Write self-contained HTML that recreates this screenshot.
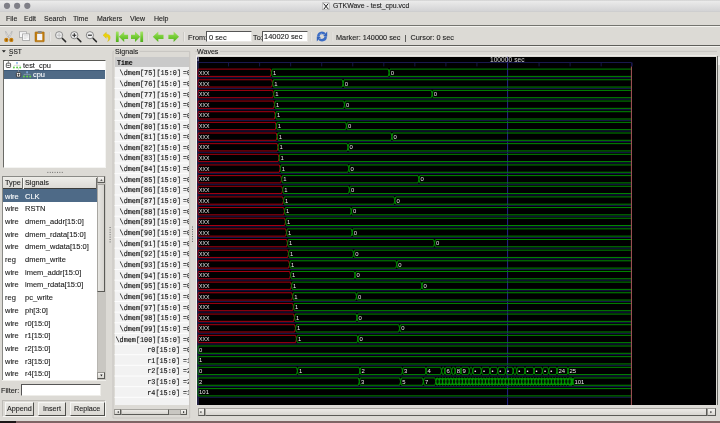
<!DOCTYPE html><html><head><meta charset="utf-8"><style>
html,body{margin:0;padding:0;}
body{width:720px;height:423px;overflow:hidden;position:relative;background:#dcdad5;font-family:"Liberation Sans",sans-serif;}
.t{position:absolute;white-space:pre;will-change:transform;-webkit-text-stroke:0.1px currentColor;}
.r{position:absolute;box-sizing:border-box;}
svg{position:absolute;left:0;top:0;will-change:transform;}
</style></head><body>
<div class="r" style="left:0px;top:0px;width:720px;height:12px;background:linear-gradient(#c4c4c4 0px,#ebebeb 1px,#e4e4e4 4px,#d3d3d5 11px,#c9c9c9 12px);"></div>
<svg width="720" height="12" viewBox="0 0 720 12"><circle cx="7" cy="5.8" r="3.1" fill="#7f7f87"/><circle cx="17.1" cy="5.8" r="3.1" fill="#7f7f87"/><circle cx="27.3" cy="5.8" r="3.1" fill="#7f7f87"/><rect x="322.3" y="2.8" width="7.4" height="7" fill="#f0f0f0" stroke="#9a9a9a" stroke-width="0.5"/><path d="M323.6 3.6 L328.4 9.2 M328.2 3.6 L323.8 9.2" stroke="#222" stroke-width="1"/></svg>
<div class="t" style="left:332.90px;top:2.76px;font-family:'Liberation Sans', sans-serif;font-size:6.9px;line-height:6.9px;color:#1a1a1a;font-weight:normal;">GTKWave - test_cpu.vcd</div>
<div class="t" style="left:5.70px;top:15.17px;font-family:'Liberation Sans', sans-serif;font-size:7px;line-height:7px;color:#202020;font-weight:normal;">File</div>
<div class="t" style="left:23.70px;top:15.17px;font-family:'Liberation Sans', sans-serif;font-size:7px;line-height:7px;color:#202020;font-weight:normal;">Edit</div>
<div class="t" style="left:43.70px;top:15.17px;font-family:'Liberation Sans', sans-serif;font-size:7px;line-height:7px;color:#202020;font-weight:normal;">Search</div>
<div class="t" style="left:73.10px;top:15.17px;font-family:'Liberation Sans', sans-serif;font-size:7px;line-height:7px;color:#202020;font-weight:normal;">Time</div>
<div class="t" style="left:97.00px;top:15.17px;font-family:'Liberation Sans', sans-serif;font-size:7px;line-height:7px;color:#202020;font-weight:normal;">Markers</div>
<div class="t" style="left:130.30px;top:15.17px;font-family:'Liberation Sans', sans-serif;font-size:7px;line-height:7px;color:#202020;font-weight:normal;">View</div>
<div class="t" style="left:153.70px;top:15.17px;font-family:'Liberation Sans', sans-serif;font-size:7px;line-height:7px;color:#202020;font-weight:normal;">Help</div>
<div class="r" style="left:0px;top:25px;width:720px;height:1px;background:#74746f;"></div>
<div class="r" style="left:0px;top:26px;width:720px;height:1px;background:#f4f3ef;"></div>
<svg width="720" height="50" viewBox="0 0 720 50">
<defs>
<linearGradient id="gg" x1="0" y1="0" x2="0" y2="1"><stop offset="0" stop-color="#a6e46a"/><stop offset="0.5" stop-color="#74cc34"/><stop offset="1" stop-color="#4fae1c"/></linearGradient>
<linearGradient id="bg1" x1="0" y1="0" x2="0" y2="1"><stop offset="0" stop-color="#6c9ae0"/><stop offset="1" stop-color="#2f62c0"/></linearGradient>
</defs>
<!-- scissors -->
<path d="M5.6 31.2 Q5.2 33.8 8.2 37.6 L9.2 37 Q6.8 33.4 5.6 31.2 Z" fill="#f2f2f2" stroke="#a4a4a4" stroke-width="0.6"/>
<path d="M12 31.2 Q12.4 33.8 9.4 37.6 L8.4 37 Q10.8 33.4 12 31.2 Z" fill="#f2f2f2" stroke="#a4a4a4" stroke-width="0.6"/>
<ellipse cx="6.3" cy="39.9" rx="2.1" ry="2.2" fill="#c67f0c"/>
<ellipse cx="11.3" cy="39.9" rx="2.1" ry="2.2" fill="#c67f0c"/>
<circle cx="6.4" cy="39.9" r="0.6" fill="#6a4000"/>
<circle cx="11.2" cy="39.9" r="0.6" fill="#6a4000"/>
<!-- copy -->
<rect x="19.5" y="31.7" width="7" height="5.8" fill="#f6f6f6" stroke="#a8a8a8" stroke-width="0.8"/>
<rect x="22.6" y="33.9" width="7" height="6.5" fill="#f9f9f9" stroke="#a0a0a0" stroke-width="0.8"/>
<path d="M23.8 35.6 H28.4 M23.8 37 H28.4 M23.8 38.4 H26.4" stroke="#c8c8c8" stroke-width="0.5"/>
<!-- clipboard -->
<rect x="35" y="31.9" width="9.2" height="9.9" rx="0.6" fill="#c27e10" stroke="#9a6008" stroke-width="0.5"/>
<rect x="37.1" y="33.8" width="5.2" height="6.4" fill="#f4f4f8"/>
<rect x="37.6" y="31" width="4.2" height="2.3" rx="0.8" fill="#8a8a8a"/>
<!-- sep -->
<rect x="49.6" y="32" width="0.6" height="9.5" fill="#c4c2bd"/><rect x="50.2" y="32" width="0.6" height="9.5" fill="#f2f1ee"/>
<!-- zoom fit -->
<path d="M62.2 38.2 L65.6 41.6" stroke="#2a2a2a" stroke-width="1.5" stroke-linecap="round"/>
<circle cx="59.1" cy="35.2" r="3.6" fill="#eeeeee" stroke="#808080" stroke-width="0.9"/>
<path d="M59.1 32.6 V37.8 M56.5 35.2 H61.7" stroke="#b8b8b8" stroke-width="0.8"/>
<!-- zoom in -->
<path d="M77.4 38.2 L80.8 41.6" stroke="#2a2a2a" stroke-width="1.5" stroke-linecap="round"/>
<circle cx="74.3" cy="35.2" r="3.6" fill="#f0f0f0" stroke="#7a7a7a" stroke-width="0.9"/>
<path d="M74.3 33.2 V37.2 M72.3 35.2 H76.3" stroke="#2a2a2a" stroke-width="1.1"/>
<!-- zoom out -->
<path d="M93 38.2 L96.4 41.6" stroke="#2a2a2a" stroke-width="1.5" stroke-linecap="round"/>
<circle cx="89.9" cy="35.2" r="3.6" fill="#f0f0f0" stroke="#7a7a7a" stroke-width="0.9"/>
<path d="M87.9 35.2 H91.9" stroke="#2a2a2a" stroke-width="1.2"/>
<!-- undo yellow -->
<path d="M103 35.2 L106.3 32.2 L106.3 34 Q110.6 34.4 110.2 38.2 Q109.8 40.8 107.6 41.6 Q108.9 39.6 108.2 38 Q107.6 36.6 106.3 36.6 L106.3 38.4 Z" fill="#ecd20a" stroke="#c8ac00" stroke-width="0.3"/>
<!-- go first -->
<rect x="115.9" y="31.5" width="2.8" height="10.5" rx="0.5" fill="url(#gg)"/>
<path d="M118.9 36.8 L124.2 31.6 V34.8 H128.1 V39 H124.2 V42 Z" fill="url(#gg)"/>
<!-- go last -->
<path d="M131 34.8 H135 V31.6 L140.2 36.8 L135 42 V39 H131 Z" fill="url(#gg)"/>
<rect x="140.3" y="31.5" width="2.8" height="10.5" rx="0.5" fill="url(#gg)"/>
<!-- sep -->
<rect x="147.2" y="32" width="0.6" height="9.5" fill="#c4c2bd"/><rect x="147.8" y="32" width="0.6" height="9.5" fill="#f2f1ee"/>
<!-- left arrow -->
<path d="M152.8 36.8 L158.3 31.6 V34.8 H163.5 V39 H158.3 V42 Z" fill="url(#gg)"/>
<!-- right arrow -->
<path d="M168.4 34.8 H173.6 V31.6 L179 36.8 L173.6 42 V39 H168.4 Z" fill="url(#gg)"/>
<!-- sep -->
<rect x="183.4" y="32" width="0.6" height="9.5" fill="#c4c2bd"/><rect x="184" y="32" width="0.6" height="9.5" fill="#f2f1ee"/>
<rect x="310.8" y="32" width="0.6" height="9.5" fill="#c4c2bd"/><rect x="311.4" y="32" width="0.6" height="9.5" fill="#f2f1ee"/>
<rect x="331.9" y="32" width="0.6" height="9.5" fill="#c4c2bd"/><rect x="332.5" y="32" width="0.6" height="9.5" fill="#f2f1ee"/>
<!-- refresh -->
<g fill="none" stroke="#3b6cc4" stroke-width="2.4">
<path d="M318.2 36.6 Q318.4 32.9 322 32.7 Q323.8 32.7 324.8 33.9"/>
<path d="M325.8 36.4 Q325.6 40.1 322 40.3 Q320.2 40.3 319.2 39.1"/>
</g>
<path d="M323.2 35.9 L327.2 31.6 L327.2 36.6 Z" fill="#3464bc"/>
<path d="M320.8 37.1 L316.8 41.4 L316.8 36.4 Z" fill="#3464bc"/>
<path d="M319.6 35 Q320.4 33.6 322 33.5" stroke="#8fb4ec" stroke-width="0.6" fill="none"/>
</svg>

<div class="t" style="left:188.00px;top:33.62px;font-family:'Liberation Sans', sans-serif;font-size:7.3px;line-height:7.3px;color:#202020;font-weight:normal;">From:</div>
<div class="r" style="left:206px;top:31px;width:45.5px;height:11.3px;background:#fff;border-top:1px solid #555;border-left:1px solid #555;border-right:1px solid #e8e6e2;border-bottom:1px solid #e8e6e2;"></div>
<div class="t" style="left:208.60px;top:33.54px;font-family:'Liberation Sans', sans-serif;font-size:7.4px;line-height:7.4px;color:#202020;font-weight:normal;">0 sec</div>
<div class="t" style="left:253.00px;top:33.62px;font-family:'Liberation Sans', sans-serif;font-size:7.3px;line-height:7.3px;color:#202020;font-weight:normal;">To:</div>
<div class="r" style="left:262.3px;top:31px;width:45.5px;height:11.3px;background:#fff;border-top:1px solid #555;border-left:1px solid #555;border-right:1px solid #e8e6e2;border-bottom:1px solid #e8e6e2;"></div>
<div class="t" style="left:264.20px;top:33.49px;font-family:'Liberation Sans', sans-serif;font-size:7.45px;line-height:7.45px;color:#202020;font-weight:normal;">140020 sec</div>
<div class="t" style="left:335.80px;top:33.72px;font-family:'Liberation Sans', sans-serif;font-size:7.3px;line-height:7.3px;color:#202020;font-weight:normal;">Marker: 140000 sec  |  Cursor: 0 sec</div>
<div class="r" style="left:0px;top:45px;width:720px;height:1px;background:#5e5e5a;"></div>
<div class="r" style="left:0px;top:46px;width:720px;height:1px;background:#f2f1ed;"></div>
<svg width="720" height="423" viewBox="0 0 720 423" style="z-index:1"><path d="M1.8 50.2 L5.9 50.2 L3.85 52.5 Z" fill="#222"/></svg>
<div class="t" style="left:8.70px;top:49.11px;font-family:'Liberation Sans', sans-serif;font-size:6.6px;line-height:6.6px;color:#202020;font-weight:normal;">SST</div>
<div class="r" style="left:8.9px;top:54.9px;width:3.6px;height:0.8px;background:#555;"></div>
<div class="r" style="left:3.3px;top:60px;width:102.6px;height:107.8px;background:#ffffff;border-top:1px solid #5a5a56;border-left:1px solid #6a6a66;border-right:1px solid #f4f4f2;border-bottom:1px solid #f4f4f2;"></div>
<div class="r" style="left:4.3px;top:70.2px;width:100.6px;height:8.7px;background:#4f6a86;border-top:1px solid #3e5a78;"></div>
<svg width="720" height="423" viewBox="0 0 720 423" style="z-index:2"><path d="M8.4 61 V63" stroke="#555" stroke-width="0.6"/><rect x="6.3" y="63.2" width="4.3" height="4.3" rx="0.8" fill="#fff" stroke="#333" stroke-width="0.8"/><path d="M7.3 65.35 H9.6" stroke="#222" stroke-width="0.8"/><rect x="16.2" y="62.2" width="1.6" height="1.5" fill="#6aa0e8"/><path d="M17 63.7 V65.4 M14 66 V65.4 H20.2 V66" stroke="#c0c0c0" stroke-width="0.5" fill="none"/><circle cx="13.9" cy="67.4" r="1" fill="#5ccc4c"/><circle cx="17.1" cy="67.4" r="1" fill="#5ccc4c"/><circle cx="20.2" cy="67.4" r="1" fill="#5ccc4c"/><path d="M18.5 68 V72.5" stroke="#bbb" stroke-width="0.5"/><rect x="16.4" y="72.6" width="4.3" height="4.3" rx="0.8" fill="#fff" stroke="#222" stroke-width="0.8"/><path d="M17.4 74.75 H19.7 M18.55 73.6 V75.9" stroke="#222" stroke-width="0.8"/><rect x="26.3" y="71.4" width="1.6" height="1.5" fill="#8ab8f0"/><path d="M27.1 72.9 V74.4 M24 75 V74.4 H30.2 V75" stroke="#a8b4c4" stroke-width="0.5" fill="none"/><circle cx="23.9" cy="76.5" r="1" fill="#66d44c"/><circle cx="27.1" cy="76.5" r="1" fill="#66d44c"/><circle cx="30.2" cy="76.5" r="1" fill="#66d44c"/></svg>
<div class="t" style="left:23.00px;top:61.54px;font-family:'Liberation Sans', sans-serif;font-size:7.4px;line-height:7.4px;color:#1a1a1a;font-weight:normal;z-index:3;">test_cpu</div>
<div class="t" style="left:33.00px;top:70.64px;font-family:'Liberation Sans', sans-serif;font-size:7.4px;line-height:7.4px;color:#ffffff;font-weight:normal;z-index:3;">cpu</div>
<svg width="720" height="423" viewBox="0 0 720 423" style="z-index:1"><rect x="47.40" y="171.9" width="0.9" height="0.9" fill="#555"/><rect x="49.80" y="171.9" width="0.9" height="0.9" fill="#555"/><rect x="52.20" y="171.9" width="0.9" height="0.9" fill="#555"/><rect x="54.60" y="171.9" width="0.9" height="0.9" fill="#555"/><rect x="57.00" y="171.9" width="0.9" height="0.9" fill="#555"/><rect x="59.40" y="171.9" width="0.9" height="0.9" fill="#555"/><rect x="61.80" y="171.9" width="0.9" height="0.9" fill="#555"/><rect x="109.6" y="227.00" width="1" height="1" fill="#666"/><rect x="109.6" y="229.40" width="1" height="1" fill="#666"/><rect x="109.6" y="231.80" width="1" height="1" fill="#666"/><rect x="109.6" y="234.20" width="1" height="1" fill="#666"/><rect x="109.6" y="236.60" width="1" height="1" fill="#666"/><rect x="109.6" y="239.00" width="1" height="1" fill="#666"/><rect x="109.6" y="241.40" width="1" height="1" fill="#666"/><rect x="192" y="226.50" width="1" height="1" fill="#666"/><rect x="192" y="228.90" width="1" height="1" fill="#666"/><rect x="192" y="231.30" width="1" height="1" fill="#666"/><rect x="192" y="233.70" width="1" height="1" fill="#666"/><rect x="192" y="236.10" width="1" height="1" fill="#666"/><rect x="192" y="238.50" width="1" height="1" fill="#666"/><rect x="192" y="240.90" width="1" height="1" fill="#666"/></svg>
<div class="r" style="left:2.4px;top:175.6px;width:103.4px;height:204px;background:#ffffff;border-top:1px solid #8a8a86;border-left:1px solid #8a8a86;"></div>
<div class="r" style="left:3.4px;top:176.6px;width:93.3px;height:12.5px;background:linear-gradient(#eeede9,#dcdad5);border-bottom:1px solid #3c3c3a;"></div>
<div class="r" style="left:22.4px;top:177.5px;width:0.8px;height:11px;background:#6e6e6a;"></div>
<div class="r" style="left:23.2px;top:177.5px;width:0.6px;height:11px;background:#f6f6f4;"></div>
<div class="r" style="left:95.8px;top:177.5px;width:0.8px;height:11.5px;background:#6e6e6a;"></div>
<div class="t" style="left:5.20px;top:179.42px;font-family:'Liberation Sans', sans-serif;font-size:7.3px;line-height:7.3px;color:#222;font-weight:normal;">Type</div>
<div class="t" style="left:25.00px;top:179.42px;font-family:'Liberation Sans', sans-serif;font-size:7.3px;line-height:7.3px;color:#222;font-weight:normal;">Signals</div>
<div class="r" style="left:3.4px;top:189.3px;width:93.3px;height:12.7px;background:#4e6a87;"></div>
<div class="t" style="left:4.70px;top:192.55px;font-family:'Liberation Sans', sans-serif;font-size:7.5px;line-height:7.5px;color:#ffffff;font-weight:normal;">wire</div>
<div class="t" style="left:25.30px;top:192.55px;font-family:'Liberation Sans', sans-serif;font-size:7.5px;line-height:7.5px;color:#ffffff;font-weight:normal;">CLK</div>
<div class="t" style="left:4.70px;top:205.25px;font-family:'Liberation Sans', sans-serif;font-size:7.5px;line-height:7.5px;color:#1a1a1a;font-weight:normal;">wire</div>
<div class="t" style="left:25.30px;top:205.25px;font-family:'Liberation Sans', sans-serif;font-size:7.5px;line-height:7.5px;color:#1a1a1a;font-weight:normal;">RSTN</div>
<div class="t" style="left:4.70px;top:217.95px;font-family:'Liberation Sans', sans-serif;font-size:7.5px;line-height:7.5px;color:#1a1a1a;font-weight:normal;">wire</div>
<div class="t" style="left:25.30px;top:217.95px;font-family:'Liberation Sans', sans-serif;font-size:7.5px;line-height:7.5px;color:#1a1a1a;font-weight:normal;">dmem_addr[15:0]</div>
<div class="t" style="left:4.70px;top:230.65px;font-family:'Liberation Sans', sans-serif;font-size:7.5px;line-height:7.5px;color:#1a1a1a;font-weight:normal;">wire</div>
<div class="t" style="left:25.30px;top:230.65px;font-family:'Liberation Sans', sans-serif;font-size:7.5px;line-height:7.5px;color:#1a1a1a;font-weight:normal;">dmem_rdata[15:0]</div>
<div class="t" style="left:4.70px;top:243.35px;font-family:'Liberation Sans', sans-serif;font-size:7.5px;line-height:7.5px;color:#1a1a1a;font-weight:normal;">wire</div>
<div class="t" style="left:25.30px;top:243.35px;font-family:'Liberation Sans', sans-serif;font-size:7.5px;line-height:7.5px;color:#1a1a1a;font-weight:normal;">dmem_wdata[15:0]</div>
<div class="t" style="left:4.70px;top:256.05px;font-family:'Liberation Sans', sans-serif;font-size:7.5px;line-height:7.5px;color:#1a1a1a;font-weight:normal;">reg</div>
<div class="t" style="left:25.30px;top:256.05px;font-family:'Liberation Sans', sans-serif;font-size:7.5px;line-height:7.5px;color:#1a1a1a;font-weight:normal;">dmem_write</div>
<div class="t" style="left:4.70px;top:268.75px;font-family:'Liberation Sans', sans-serif;font-size:7.5px;line-height:7.5px;color:#1a1a1a;font-weight:normal;">wire</div>
<div class="t" style="left:25.30px;top:268.75px;font-family:'Liberation Sans', sans-serif;font-size:7.5px;line-height:7.5px;color:#1a1a1a;font-weight:normal;">imem_addr[15:0]</div>
<div class="t" style="left:4.70px;top:281.45px;font-family:'Liberation Sans', sans-serif;font-size:7.5px;line-height:7.5px;color:#1a1a1a;font-weight:normal;">wire</div>
<div class="t" style="left:25.30px;top:281.45px;font-family:'Liberation Sans', sans-serif;font-size:7.5px;line-height:7.5px;color:#1a1a1a;font-weight:normal;">imem_rdata[15:0]</div>
<div class="t" style="left:4.70px;top:294.15px;font-family:'Liberation Sans', sans-serif;font-size:7.5px;line-height:7.5px;color:#1a1a1a;font-weight:normal;">reg</div>
<div class="t" style="left:25.30px;top:294.15px;font-family:'Liberation Sans', sans-serif;font-size:7.5px;line-height:7.5px;color:#1a1a1a;font-weight:normal;">pc_write</div>
<div class="t" style="left:4.70px;top:306.85px;font-family:'Liberation Sans', sans-serif;font-size:7.5px;line-height:7.5px;color:#1a1a1a;font-weight:normal;">wire</div>
<div class="t" style="left:25.30px;top:306.85px;font-family:'Liberation Sans', sans-serif;font-size:7.5px;line-height:7.5px;color:#1a1a1a;font-weight:normal;">ph[3:0]</div>
<div class="t" style="left:4.70px;top:319.55px;font-family:'Liberation Sans', sans-serif;font-size:7.5px;line-height:7.5px;color:#1a1a1a;font-weight:normal;">wire</div>
<div class="t" style="left:25.30px;top:319.55px;font-family:'Liberation Sans', sans-serif;font-size:7.5px;line-height:7.5px;color:#1a1a1a;font-weight:normal;">r0[15:0]</div>
<div class="t" style="left:4.70px;top:332.25px;font-family:'Liberation Sans', sans-serif;font-size:7.5px;line-height:7.5px;color:#1a1a1a;font-weight:normal;">wire</div>
<div class="t" style="left:25.30px;top:332.25px;font-family:'Liberation Sans', sans-serif;font-size:7.5px;line-height:7.5px;color:#1a1a1a;font-weight:normal;">r1[15:0]</div>
<div class="t" style="left:4.70px;top:344.95px;font-family:'Liberation Sans', sans-serif;font-size:7.5px;line-height:7.5px;color:#1a1a1a;font-weight:normal;">wire</div>
<div class="t" style="left:25.30px;top:344.95px;font-family:'Liberation Sans', sans-serif;font-size:7.5px;line-height:7.5px;color:#1a1a1a;font-weight:normal;">r2[15:0]</div>
<div class="t" style="left:4.70px;top:357.65px;font-family:'Liberation Sans', sans-serif;font-size:7.5px;line-height:7.5px;color:#1a1a1a;font-weight:normal;">wire</div>
<div class="t" style="left:25.30px;top:357.65px;font-family:'Liberation Sans', sans-serif;font-size:7.5px;line-height:7.5px;color:#1a1a1a;font-weight:normal;">r3[15:0]</div>
<div class="t" style="left:4.70px;top:370.35px;font-family:'Liberation Sans', sans-serif;font-size:7.5px;line-height:7.5px;color:#1a1a1a;font-weight:normal;">wire</div>
<div class="t" style="left:25.30px;top:370.35px;font-family:'Liberation Sans', sans-serif;font-size:7.5px;line-height:7.5px;color:#1a1a1a;font-weight:normal;">r4[15:0]</div>
<div class="r" style="left:96.7px;top:175.6px;width:9.1px;height:204px;background:#c9c7c2;border-left:1px solid #b8b6b1;"></div>
<div class="r" style="left:97.3px;top:176.4px;width:8.2px;height:6.9px;background:linear-gradient(#f4f3f0,#d8d6d1);border:1px solid #9a9893;border-right-color:#5a5a56;border-bottom-color:#5a5a56;"></div>
<div class="r" style="left:97.3px;top:183.6px;width:8.2px;height:108px;background:linear-gradient(90deg,#e6e5e1,#d6d4cf);border:1px solid #a8a6a1;border-right:1.3px solid #5a5a56;border-bottom:1.3px solid #5a5a56;"></div>
<div class="r" style="left:97.3px;top:371.8px;width:8.2px;height:7.5px;background:linear-gradient(#f4f3f0,#d8d6d1);border:1px solid #9a9893;border-right-color:#5a5a56;border-bottom-color:#5a5a56;"></div>
<svg width="720" height="423" viewBox="0 0 720 423" style="z-index:2"><path d="M100.2 180.8 L101.4 179.2 L102.6 180.8 Z" fill="#333"/><path d="M100.2 374.6 L102.6 374.6 L101.4 376.4 Z" fill="#222"/></svg>
<div class="r" style="left:2.4px;top:379.5px;width:103.4px;height:1px;background:#f0efeb;"></div>
<div class="t" style="left:0.80px;top:386.82px;font-family:'Liberation Sans', sans-serif;font-size:7.3px;line-height:7.3px;color:#222;font-weight:normal;">Filter:</div>
<div class="r" style="left:21.4px;top:384px;width:79.4px;height:12.4px;background:#ffffff;border-top:1px solid #555;border-left:1px solid #555;border-right:1px solid #eeede9;border-bottom:1px solid #eeede9;"></div>
<div class="r" style="left:1.5px;top:399.8px;width:104px;height:17.6px;background:transparent;border:1px solid #bdbbb6;border-right-color:#f6f5f2;border-bottom-color:#f6f5f2;"></div>
<div class="r" style="left:4.6px;top:402px;width:29.799999999999997px;height:13.5px;background:linear-gradient(#e8e7e3,#dad8d3);border:1px solid #c2c0bb;border-right:1.3px solid #4e4e4a;border-bottom:1.3px solid #4e4e4a;border-top-color:#f6f6f4;border-left-color:#f6f6f4;"></div>
<div class="t" style="left:6.90px;top:405.41px;font-family:'Liberation Sans', sans-serif;font-size:7.2px;line-height:7.2px;color:#222;font-weight:normal;">Append</div>
<div class="r" style="left:38.2px;top:402px;width:27.5px;height:13.5px;background:linear-gradient(#e8e7e3,#dad8d3);border:1px solid #c2c0bb;border-right:1.3px solid #4e4e4a;border-bottom:1.3px solid #4e4e4a;border-top-color:#f6f6f4;border-left-color:#f6f6f4;"></div>
<div class="t" style="left:42.80px;top:405.41px;font-family:'Liberation Sans', sans-serif;font-size:7.2px;line-height:7.2px;color:#222;font-weight:normal;">Insert</div>
<div class="r" style="left:69.5px;top:402px;width:35.2px;height:13.5px;background:linear-gradient(#e8e7e3,#dad8d3);border:1px solid #c2c0bb;border-right:1.3px solid #4e4e4a;border-bottom:1.3px solid #4e4e4a;border-top-color:#f6f6f4;border-left-color:#f6f6f4;"></div>
<div class="t" style="left:74.10px;top:405.41px;font-family:'Liberation Sans', sans-serif;font-size:7.2px;line-height:7.2px;color:#222;font-weight:normal;">Replace</div>
<div class="t" style="left:114.90px;top:48.59px;font-family:'Liberation Sans', sans-serif;font-size:7.1px;line-height:7.1px;color:#222;font-weight:normal;">Signals</div>
<svg width="720" height="423" viewBox="0 0 720 423" style="z-index:1"><path d="M113 51.4 H114 M139.5 51.4 H189.7 V418 M113 51.4 V418 H189.7" stroke="#c4c2bd" stroke-width="0.9" fill="none"/><path d="M195.4 51.4 H197 M220 51.4 H717" stroke="#c4c2bd" stroke-width="0.9" fill="none"/><path d="M196 55.6 H716.5" stroke="#efeeea" stroke-width="0.9" fill="none"/></svg>
<div class="r" style="left:114.5px;top:57.1px;width:74px;height:348px;background:#f2f2f2;"></div>
<div class="r" style="left:114.5px;top:57.1px;width:74px;height:9.7px;background:#c9c9c9;"></div>
<svg width="720" height="423" viewBox="0 0 720 423" style="z-index:1"><path d="M114.5 77.80 H188.4 M114.5 88.45 H188.4 M114.5 99.10 H188.4 M114.5 109.75 H188.4 M114.5 120.40 H188.4 M114.5 131.05 H188.4 M114.5 141.70 H188.4 M114.5 152.35 H188.4 M114.5 163.00 H188.4 M114.5 173.65 H188.4 M114.5 184.30 H188.4 M114.5 194.95 H188.4 M114.5 205.60 H188.4 M114.5 216.25 H188.4 M114.5 226.90 H188.4 M114.5 237.55 H188.4 M114.5 248.20 H188.4 M114.5 258.85 H188.4 M114.5 269.50 H188.4 M114.5 280.15 H188.4 M114.5 290.80 H188.4 M114.5 301.45 H188.4 M114.5 312.10 H188.4 M114.5 322.75 H188.4 M114.5 333.40 H188.4 M114.5 344.05 H188.4 M114.5 354.70 H188.4 M114.5 365.35 H188.4 M114.5 376.00 H188.4 M114.5 386.65 H188.4 M114.5 397.30 H188.4 " stroke="#fdfdfd" stroke-width="1"/></svg>
<div class="t" style="left:116.80px;top:61.02px;font-family:'Liberation Mono', monospace;font-size:6.5px;line-height:6.5px;color:#111;font-weight:bold;">Time</div>
<div class="t" style="left:120.90px;top:69.27px;font-family:'Liberation Mono', monospace;font-size:6.5px;line-height:10px;color:#111;-webkit-text-stroke:0.12px #111;text-rendering:geometricPrecision;transform:scaleY(1.14);transform:scale(1.05,1.14);transform-origin:29.25px 6.73px;">\dmem[75][15:0]</div>
<div class="t" style="left:183.0px;top:69.27px;font-family:'Liberation Mono', monospace;font-size:6.5px;line-height:10px;color:#111;-webkit-text-stroke:0.12px #111;text-rendering:geometricPrecision;transform:scaleY(1.14);transform-origin:0 6.73px;width:5.5px;overflow:hidden;">=0</div>
<div class="t" style="left:120.90px;top:79.92px;font-family:'Liberation Mono', monospace;font-size:6.5px;line-height:10px;color:#111;-webkit-text-stroke:0.12px #111;text-rendering:geometricPrecision;transform:scaleY(1.14);transform:scale(1.05,1.14);transform-origin:29.25px 6.73px;">\dmem[76][15:0]</div>
<div class="t" style="left:183.0px;top:79.92px;font-family:'Liberation Mono', monospace;font-size:6.5px;line-height:10px;color:#111;-webkit-text-stroke:0.12px #111;text-rendering:geometricPrecision;transform:scaleY(1.14);transform-origin:0 6.73px;width:5.5px;overflow:hidden;">=0</div>
<div class="t" style="left:120.90px;top:90.57px;font-family:'Liberation Mono', monospace;font-size:6.5px;line-height:10px;color:#111;-webkit-text-stroke:0.12px #111;text-rendering:geometricPrecision;transform:scaleY(1.14);transform:scale(1.05,1.14);transform-origin:29.25px 6.73px;">\dmem[77][15:0]</div>
<div class="t" style="left:183.0px;top:90.57px;font-family:'Liberation Mono', monospace;font-size:6.5px;line-height:10px;color:#111;-webkit-text-stroke:0.12px #111;text-rendering:geometricPrecision;transform:scaleY(1.14);transform-origin:0 6.73px;width:5.5px;overflow:hidden;">=0</div>
<div class="t" style="left:120.90px;top:101.22px;font-family:'Liberation Mono', monospace;font-size:6.5px;line-height:10px;color:#111;-webkit-text-stroke:0.12px #111;text-rendering:geometricPrecision;transform:scaleY(1.14);transform:scale(1.05,1.14);transform-origin:29.25px 6.73px;">\dmem[78][15:0]</div>
<div class="t" style="left:183.0px;top:101.22px;font-family:'Liberation Mono', monospace;font-size:6.5px;line-height:10px;color:#111;-webkit-text-stroke:0.12px #111;text-rendering:geometricPrecision;transform:scaleY(1.14);transform-origin:0 6.73px;width:5.5px;overflow:hidden;">=0</div>
<div class="t" style="left:120.90px;top:111.87px;font-family:'Liberation Mono', monospace;font-size:6.5px;line-height:10px;color:#111;-webkit-text-stroke:0.12px #111;text-rendering:geometricPrecision;transform:scaleY(1.14);transform:scale(1.05,1.14);transform-origin:29.25px 6.73px;">\dmem[79][15:0]</div>
<div class="t" style="left:183.0px;top:111.87px;font-family:'Liberation Mono', monospace;font-size:6.5px;line-height:10px;color:#111;-webkit-text-stroke:0.12px #111;text-rendering:geometricPrecision;transform:scaleY(1.14);transform-origin:0 6.73px;width:5.5px;overflow:hidden;">=0</div>
<div class="t" style="left:120.90px;top:122.52px;font-family:'Liberation Mono', monospace;font-size:6.5px;line-height:10px;color:#111;-webkit-text-stroke:0.12px #111;text-rendering:geometricPrecision;transform:scaleY(1.14);transform:scale(1.05,1.14);transform-origin:29.25px 6.73px;">\dmem[80][15:0]</div>
<div class="t" style="left:183.0px;top:122.52px;font-family:'Liberation Mono', monospace;font-size:6.5px;line-height:10px;color:#111;-webkit-text-stroke:0.12px #111;text-rendering:geometricPrecision;transform:scaleY(1.14);transform-origin:0 6.73px;width:5.5px;overflow:hidden;">=0</div>
<div class="t" style="left:120.90px;top:133.17px;font-family:'Liberation Mono', monospace;font-size:6.5px;line-height:10px;color:#111;-webkit-text-stroke:0.12px #111;text-rendering:geometricPrecision;transform:scaleY(1.14);transform:scale(1.05,1.14);transform-origin:29.25px 6.73px;">\dmem[81][15:0]</div>
<div class="t" style="left:183.0px;top:133.17px;font-family:'Liberation Mono', monospace;font-size:6.5px;line-height:10px;color:#111;-webkit-text-stroke:0.12px #111;text-rendering:geometricPrecision;transform:scaleY(1.14);transform-origin:0 6.73px;width:5.5px;overflow:hidden;">=0</div>
<div class="t" style="left:120.90px;top:143.82px;font-family:'Liberation Mono', monospace;font-size:6.5px;line-height:10px;color:#111;-webkit-text-stroke:0.12px #111;text-rendering:geometricPrecision;transform:scaleY(1.14);transform:scale(1.05,1.14);transform-origin:29.25px 6.73px;">\dmem[82][15:0]</div>
<div class="t" style="left:183.0px;top:143.82px;font-family:'Liberation Mono', monospace;font-size:6.5px;line-height:10px;color:#111;-webkit-text-stroke:0.12px #111;text-rendering:geometricPrecision;transform:scaleY(1.14);transform-origin:0 6.73px;width:5.5px;overflow:hidden;">=0</div>
<div class="t" style="left:120.90px;top:154.47px;font-family:'Liberation Mono', monospace;font-size:6.5px;line-height:10px;color:#111;-webkit-text-stroke:0.12px #111;text-rendering:geometricPrecision;transform:scaleY(1.14);transform:scale(1.05,1.14);transform-origin:29.25px 6.73px;">\dmem[83][15:0]</div>
<div class="t" style="left:183.0px;top:154.47px;font-family:'Liberation Mono', monospace;font-size:6.5px;line-height:10px;color:#111;-webkit-text-stroke:0.12px #111;text-rendering:geometricPrecision;transform:scaleY(1.14);transform-origin:0 6.73px;width:5.5px;overflow:hidden;">=0</div>
<div class="t" style="left:120.90px;top:165.12px;font-family:'Liberation Mono', monospace;font-size:6.5px;line-height:10px;color:#111;-webkit-text-stroke:0.12px #111;text-rendering:geometricPrecision;transform:scaleY(1.14);transform:scale(1.05,1.14);transform-origin:29.25px 6.73px;">\dmem[84][15:0]</div>
<div class="t" style="left:183.0px;top:165.12px;font-family:'Liberation Mono', monospace;font-size:6.5px;line-height:10px;color:#111;-webkit-text-stroke:0.12px #111;text-rendering:geometricPrecision;transform:scaleY(1.14);transform-origin:0 6.73px;width:5.5px;overflow:hidden;">=0</div>
<div class="t" style="left:120.90px;top:175.77px;font-family:'Liberation Mono', monospace;font-size:6.5px;line-height:10px;color:#111;-webkit-text-stroke:0.12px #111;text-rendering:geometricPrecision;transform:scaleY(1.14);transform:scale(1.05,1.14);transform-origin:29.25px 6.73px;">\dmem[85][15:0]</div>
<div class="t" style="left:183.0px;top:175.77px;font-family:'Liberation Mono', monospace;font-size:6.5px;line-height:10px;color:#111;-webkit-text-stroke:0.12px #111;text-rendering:geometricPrecision;transform:scaleY(1.14);transform-origin:0 6.73px;width:5.5px;overflow:hidden;">=0</div>
<div class="t" style="left:120.90px;top:186.42px;font-family:'Liberation Mono', monospace;font-size:6.5px;line-height:10px;color:#111;-webkit-text-stroke:0.12px #111;text-rendering:geometricPrecision;transform:scaleY(1.14);transform:scale(1.05,1.14);transform-origin:29.25px 6.73px;">\dmem[86][15:0]</div>
<div class="t" style="left:183.0px;top:186.42px;font-family:'Liberation Mono', monospace;font-size:6.5px;line-height:10px;color:#111;-webkit-text-stroke:0.12px #111;text-rendering:geometricPrecision;transform:scaleY(1.14);transform-origin:0 6.73px;width:5.5px;overflow:hidden;">=0</div>
<div class="t" style="left:120.90px;top:197.07px;font-family:'Liberation Mono', monospace;font-size:6.5px;line-height:10px;color:#111;-webkit-text-stroke:0.12px #111;text-rendering:geometricPrecision;transform:scaleY(1.14);transform:scale(1.05,1.14);transform-origin:29.25px 6.73px;">\dmem[87][15:0]</div>
<div class="t" style="left:183.0px;top:197.07px;font-family:'Liberation Mono', monospace;font-size:6.5px;line-height:10px;color:#111;-webkit-text-stroke:0.12px #111;text-rendering:geometricPrecision;transform:scaleY(1.14);transform-origin:0 6.73px;width:5.5px;overflow:hidden;">=0</div>
<div class="t" style="left:120.90px;top:207.72px;font-family:'Liberation Mono', monospace;font-size:6.5px;line-height:10px;color:#111;-webkit-text-stroke:0.12px #111;text-rendering:geometricPrecision;transform:scaleY(1.14);transform:scale(1.05,1.14);transform-origin:29.25px 6.73px;">\dmem[88][15:0]</div>
<div class="t" style="left:183.0px;top:207.72px;font-family:'Liberation Mono', monospace;font-size:6.5px;line-height:10px;color:#111;-webkit-text-stroke:0.12px #111;text-rendering:geometricPrecision;transform:scaleY(1.14);transform-origin:0 6.73px;width:5.5px;overflow:hidden;">=0</div>
<div class="t" style="left:120.90px;top:218.37px;font-family:'Liberation Mono', monospace;font-size:6.5px;line-height:10px;color:#111;-webkit-text-stroke:0.12px #111;text-rendering:geometricPrecision;transform:scaleY(1.14);transform:scale(1.05,1.14);transform-origin:29.25px 6.73px;">\dmem[89][15:0]</div>
<div class="t" style="left:183.0px;top:218.37px;font-family:'Liberation Mono', monospace;font-size:6.5px;line-height:10px;color:#111;-webkit-text-stroke:0.12px #111;text-rendering:geometricPrecision;transform:scaleY(1.14);transform-origin:0 6.73px;width:5.5px;overflow:hidden;">=0</div>
<div class="t" style="left:120.90px;top:229.02px;font-family:'Liberation Mono', monospace;font-size:6.5px;line-height:10px;color:#111;-webkit-text-stroke:0.12px #111;text-rendering:geometricPrecision;transform:scaleY(1.14);transform:scale(1.05,1.14);transform-origin:29.25px 6.73px;">\dmem[90][15:0]</div>
<div class="t" style="left:183.0px;top:229.02px;font-family:'Liberation Mono', monospace;font-size:6.5px;line-height:10px;color:#111;-webkit-text-stroke:0.12px #111;text-rendering:geometricPrecision;transform:scaleY(1.14);transform-origin:0 6.73px;width:5.5px;overflow:hidden;">=0</div>
<div class="t" style="left:120.90px;top:239.67px;font-family:'Liberation Mono', monospace;font-size:6.5px;line-height:10px;color:#111;-webkit-text-stroke:0.12px #111;text-rendering:geometricPrecision;transform:scaleY(1.14);transform:scale(1.05,1.14);transform-origin:29.25px 6.73px;">\dmem[91][15:0]</div>
<div class="t" style="left:183.0px;top:239.67px;font-family:'Liberation Mono', monospace;font-size:6.5px;line-height:10px;color:#111;-webkit-text-stroke:0.12px #111;text-rendering:geometricPrecision;transform:scaleY(1.14);transform-origin:0 6.73px;width:5.5px;overflow:hidden;">=0</div>
<div class="t" style="left:120.90px;top:250.32px;font-family:'Liberation Mono', monospace;font-size:6.5px;line-height:10px;color:#111;-webkit-text-stroke:0.12px #111;text-rendering:geometricPrecision;transform:scaleY(1.14);transform:scale(1.05,1.14);transform-origin:29.25px 6.73px;">\dmem[92][15:0]</div>
<div class="t" style="left:183.0px;top:250.32px;font-family:'Liberation Mono', monospace;font-size:6.5px;line-height:10px;color:#111;-webkit-text-stroke:0.12px #111;text-rendering:geometricPrecision;transform:scaleY(1.14);transform-origin:0 6.73px;width:5.5px;overflow:hidden;">=0</div>
<div class="t" style="left:120.90px;top:260.97px;font-family:'Liberation Mono', monospace;font-size:6.5px;line-height:10px;color:#111;-webkit-text-stroke:0.12px #111;text-rendering:geometricPrecision;transform:scaleY(1.14);transform:scale(1.05,1.14);transform-origin:29.25px 6.73px;">\dmem[93][15:0]</div>
<div class="t" style="left:183.0px;top:260.97px;font-family:'Liberation Mono', monospace;font-size:6.5px;line-height:10px;color:#111;-webkit-text-stroke:0.12px #111;text-rendering:geometricPrecision;transform:scaleY(1.14);transform-origin:0 6.73px;width:5.5px;overflow:hidden;">=0</div>
<div class="t" style="left:120.90px;top:271.62px;font-family:'Liberation Mono', monospace;font-size:6.5px;line-height:10px;color:#111;-webkit-text-stroke:0.12px #111;text-rendering:geometricPrecision;transform:scaleY(1.14);transform:scale(1.05,1.14);transform-origin:29.25px 6.73px;">\dmem[94][15:0]</div>
<div class="t" style="left:183.0px;top:271.62px;font-family:'Liberation Mono', monospace;font-size:6.5px;line-height:10px;color:#111;-webkit-text-stroke:0.12px #111;text-rendering:geometricPrecision;transform:scaleY(1.14);transform-origin:0 6.73px;width:5.5px;overflow:hidden;">=0</div>
<div class="t" style="left:120.90px;top:282.27px;font-family:'Liberation Mono', monospace;font-size:6.5px;line-height:10px;color:#111;-webkit-text-stroke:0.12px #111;text-rendering:geometricPrecision;transform:scaleY(1.14);transform:scale(1.05,1.14);transform-origin:29.25px 6.73px;">\dmem[95][15:0]</div>
<div class="t" style="left:183.0px;top:282.27px;font-family:'Liberation Mono', monospace;font-size:6.5px;line-height:10px;color:#111;-webkit-text-stroke:0.12px #111;text-rendering:geometricPrecision;transform:scaleY(1.14);transform-origin:0 6.73px;width:5.5px;overflow:hidden;">=0</div>
<div class="t" style="left:120.90px;top:292.92px;font-family:'Liberation Mono', monospace;font-size:6.5px;line-height:10px;color:#111;-webkit-text-stroke:0.12px #111;text-rendering:geometricPrecision;transform:scaleY(1.14);transform:scale(1.05,1.14);transform-origin:29.25px 6.73px;">\dmem[96][15:0]</div>
<div class="t" style="left:183.0px;top:292.92px;font-family:'Liberation Mono', monospace;font-size:6.5px;line-height:10px;color:#111;-webkit-text-stroke:0.12px #111;text-rendering:geometricPrecision;transform:scaleY(1.14);transform-origin:0 6.73px;width:5.5px;overflow:hidden;">=0</div>
<div class="t" style="left:120.90px;top:303.57px;font-family:'Liberation Mono', monospace;font-size:6.5px;line-height:10px;color:#111;-webkit-text-stroke:0.12px #111;text-rendering:geometricPrecision;transform:scaleY(1.14);transform:scale(1.05,1.14);transform-origin:29.25px 6.73px;">\dmem[97][15:0]</div>
<div class="t" style="left:183.0px;top:303.57px;font-family:'Liberation Mono', monospace;font-size:6.5px;line-height:10px;color:#111;-webkit-text-stroke:0.12px #111;text-rendering:geometricPrecision;transform:scaleY(1.14);transform-origin:0 6.73px;width:5.5px;overflow:hidden;">=0</div>
<div class="t" style="left:120.90px;top:314.22px;font-family:'Liberation Mono', monospace;font-size:6.5px;line-height:10px;color:#111;-webkit-text-stroke:0.12px #111;text-rendering:geometricPrecision;transform:scaleY(1.14);transform:scale(1.05,1.14);transform-origin:29.25px 6.73px;">\dmem[98][15:0]</div>
<div class="t" style="left:183.0px;top:314.22px;font-family:'Liberation Mono', monospace;font-size:6.5px;line-height:10px;color:#111;-webkit-text-stroke:0.12px #111;text-rendering:geometricPrecision;transform:scaleY(1.14);transform-origin:0 6.73px;width:5.5px;overflow:hidden;">=0</div>
<div class="t" style="left:120.90px;top:324.87px;font-family:'Liberation Mono', monospace;font-size:6.5px;line-height:10px;color:#111;-webkit-text-stroke:0.12px #111;text-rendering:geometricPrecision;transform:scaleY(1.14);transform:scale(1.05,1.14);transform-origin:29.25px 6.73px;">\dmem[99][15:0]</div>
<div class="t" style="left:183.0px;top:324.87px;font-family:'Liberation Mono', monospace;font-size:6.5px;line-height:10px;color:#111;-webkit-text-stroke:0.12px #111;text-rendering:geometricPrecision;transform:scaleY(1.14);transform-origin:0 6.73px;width:5.5px;overflow:hidden;">=0</div>
<div class="t" style="left:117.00px;top:335.52px;font-family:'Liberation Mono', monospace;font-size:6.5px;line-height:10px;color:#111;-webkit-text-stroke:0.12px #111;text-rendering:geometricPrecision;transform:scaleY(1.14);transform:scale(1.05,1.14);transform-origin:31.20px 6.73px;">\dmem[100][15:0]</div>
<div class="t" style="left:183.0px;top:335.52px;font-family:'Liberation Mono', monospace;font-size:6.5px;line-height:10px;color:#111;-webkit-text-stroke:0.12px #111;text-rendering:geometricPrecision;transform:scaleY(1.14);transform-origin:0 6.73px;width:5.5px;overflow:hidden;">=0</div>
<div class="t" style="left:148.20px;top:346.17px;font-family:'Liberation Mono', monospace;font-size:6.5px;line-height:10px;color:#111;-webkit-text-stroke:0.12px #111;text-rendering:geometricPrecision;transform:scaleY(1.14);transform:scale(1.05,1.14);transform-origin:15.60px 6.73px;">r0[15:0]</div>
<div class="t" style="left:183.0px;top:346.17px;font-family:'Liberation Mono', monospace;font-size:6.5px;line-height:10px;color:#111;-webkit-text-stroke:0.12px #111;text-rendering:geometricPrecision;transform:scaleY(1.14);transform-origin:0 6.73px;width:5.5px;overflow:hidden;">=0</div>
<div class="t" style="left:148.20px;top:356.82px;font-family:'Liberation Mono', monospace;font-size:6.5px;line-height:10px;color:#111;-webkit-text-stroke:0.12px #111;text-rendering:geometricPrecision;transform:scaleY(1.14);transform:scale(1.05,1.14);transform-origin:15.60px 6.73px;">r1[15:0]</div>
<div class="t" style="left:183.0px;top:356.82px;font-family:'Liberation Mono', monospace;font-size:6.5px;line-height:10px;color:#111;-webkit-text-stroke:0.12px #111;text-rendering:geometricPrecision;transform:scaleY(1.14);transform-origin:0 6.73px;width:5.5px;overflow:hidden;">=1</div>
<div class="t" style="left:148.20px;top:367.47px;font-family:'Liberation Mono', monospace;font-size:6.5px;line-height:10px;color:#111;-webkit-text-stroke:0.12px #111;text-rendering:geometricPrecision;transform:scaleY(1.14);transform:scale(1.05,1.14);transform-origin:15.60px 6.73px;">r2[15:0]</div>
<div class="t" style="left:183.0px;top:367.47px;font-family:'Liberation Mono', monospace;font-size:6.5px;line-height:10px;color:#111;-webkit-text-stroke:0.12px #111;text-rendering:geometricPrecision;transform:scaleY(1.14);transform-origin:0 6.73px;width:5.5px;overflow:hidden;">=2</div>
<div class="t" style="left:148.20px;top:378.12px;font-family:'Liberation Mono', monospace;font-size:6.5px;line-height:10px;color:#111;-webkit-text-stroke:0.12px #111;text-rendering:geometricPrecision;transform:scaleY(1.14);transform:scale(1.05,1.14);transform-origin:15.60px 6.73px;">r3[15:0]</div>
<div class="t" style="left:183.0px;top:378.12px;font-family:'Liberation Mono', monospace;font-size:6.5px;line-height:10px;color:#111;-webkit-text-stroke:0.12px #111;text-rendering:geometricPrecision;transform:scaleY(1.14);transform-origin:0 6.73px;width:5.5px;overflow:hidden;">=2</div>
<div class="t" style="left:148.20px;top:388.77px;font-family:'Liberation Mono', monospace;font-size:6.5px;line-height:10px;color:#111;-webkit-text-stroke:0.12px #111;text-rendering:geometricPrecision;transform:scaleY(1.14);transform:scale(1.05,1.14);transform-origin:15.60px 6.73px;">r4[15:0]</div>
<div class="t" style="left:183.0px;top:388.77px;font-family:'Liberation Mono', monospace;font-size:6.5px;line-height:10px;color:#111;-webkit-text-stroke:0.12px #111;text-rendering:geometricPrecision;transform:scaleY(1.14);transform-origin:0 6.73px;width:5.5px;overflow:hidden;">=1</div>
<div class="r" style="left:112.4px;top:405px;width:77px;height:13px;background:#dcdad5;"></div>
<div class="r" style="left:114.4px;top:408.8px;width:72.8px;height:6.6px;background:#c9c7c2;border:1px solid #9c9a95;"></div>
<div class="r" style="left:114.4px;top:408.8px;width:6.8px;height:6.6px;background:linear-gradient(#f4f3f0,#d8d6d1);border:1px solid #9a9893;border-right-color:#5a5a56;border-bottom-color:#5a5a56;"></div>
<div class="r" style="left:121.2px;top:408.8px;width:47.7px;height:6.6px;background:linear-gradient(#eceae6,#d6d4cf);border:1px solid #a8a6a1;border-right:1.3px solid #5a5a56;border-bottom:1.3px solid #5a5a56;"></div>
<div class="r" style="left:180.4px;top:408.8px;width:6.8px;height:6.6px;background:linear-gradient(#f4f3f0,#d8d6d1);border:1px solid #9a9893;border-right-color:#5a5a56;border-bottom-color:#5a5a56;"></div>
<svg width="720" height="423" viewBox="0 0 720 423" style="z-index:2"><path d="M118.8 410.9 L117.2 412.1 L118.8 413.3 Z" fill="#333"/><path d="M183 410.9 L184.6 412.1 L183 413.3 Z" fill="#222"/><path d="M201.4 410.9 L199.8 412.1 L201.4 413.3 Z" fill="#333"/><path d="M710.4 410.9 L712 412.1 L710.4 413.3 Z" fill="#222"/></svg>
<div class="t" style="left:197.30px;top:48.59px;font-family:'Liberation Sans', sans-serif;font-size:7.1px;line-height:7.1px;color:#222;font-weight:normal;">Waves</div>
<div class="r" style="left:196.2px;top:56px;width:1.1px;height:349px;background:#f4f3ef;"></div>
<div class="r" style="left:197.3px;top:56.7px;width:518.4px;height:348.2px;background:#000;"></div>
<svg width="720" height="423" viewBox="0 0 720 423" style="z-index:2"><defs><clipPath id="wc"><rect x="197.3" y="56.7" width="518.4" height="348.2"/></clipPath></defs><g clip-path="url(#wc)" shape-rendering="geometricPrecision"><path d="M197.9 56.3 V405" stroke="#50509a" stroke-width="1"/><path d="M507.6 56.3 V405" stroke="#2a2a9a" stroke-width="0.9"/><path d="M197.5 62.5 H631.5" stroke="#18184e" stroke-width="1"/><path d="M228.55 62.5 V66.4" stroke="#18184e" stroke-width="0.9"/><path d="M259.60 62.5 V66.4" stroke="#18184e" stroke-width="0.9"/><path d="M290.65 62.5 V66.4" stroke="#18184e" stroke-width="0.9"/><path d="M321.70 62.5 V66.4" stroke="#18184e" stroke-width="0.9"/><path d="M352.75 62.5 V66.4" stroke="#18184e" stroke-width="0.9"/><path d="M383.80 62.5 V66.4" stroke="#18184e" stroke-width="0.9"/><path d="M414.85 62.5 V66.4" stroke="#18184e" stroke-width="0.9"/><path d="M445.90 62.5 V66.4" stroke="#18184e" stroke-width="0.9"/><path d="M476.95 62.5 V66.4" stroke="#18184e" stroke-width="0.9"/><path d="M539.05 62.5 V66.4" stroke="#18184e" stroke-width="0.9"/><path d="M570.10 62.5 V66.4" stroke="#18184e" stroke-width="0.9"/><path d="M601.15 62.5 V66.4" stroke="#18184e" stroke-width="0.9"/><path d="M632.20 62.5 V66.4" stroke="#18184e" stroke-width="0.9"/><path d="M631.5 62.5 V66.6" stroke="#18184e" stroke-width="0.9"/><path d="M197.5 77.80 H631.5 M197.5 88.45 H631.5 M197.5 99.10 H631.5 M197.5 109.75 H631.5 M197.5 120.40 H631.5 M197.5 131.05 H631.5 M197.5 141.70 H631.5 M197.5 152.35 H631.5 M197.5 163.00 H631.5 M197.5 173.65 H631.5 M197.5 184.30 H631.5 M197.5 194.95 H631.5 M197.5 205.60 H631.5 M197.5 216.25 H631.5 M197.5 226.90 H631.5 M197.5 237.55 H631.5 M197.5 248.20 H631.5 M197.5 258.85 H631.5 M197.5 269.50 H631.5 M197.5 280.15 H631.5 M197.5 290.80 H631.5 M197.5 301.45 H631.5 M197.5 312.10 H631.5 M197.5 322.75 H631.5 M197.5 333.40 H631.5 M197.5 344.05 H631.5 M197.5 354.70 H631.5 M197.5 365.35 H631.5 M197.5 376.00 H631.5 M197.5 386.65 H631.5 M197.5 397.30 H631.5 " stroke="#18184e" stroke-width="1"/><path d="M197.50 72.75 L198.40 69.10 H270.50 L271.40 72.75 L270.50 76.40 H198.40 Z" stroke="#a80010" stroke-width="1" fill="none"/><text x="199.10" y="74.85" fill="#e8e8e8" font-family="Liberation Sans" font-size="5.9" textLength="10.3" lengthAdjust="spacingAndGlyphs">XXX</text><path d="M271.40 72.75 L272.30 69.10 H388.20 L389.10 72.75 L388.20 76.40 H272.30 Z" stroke="#008a00" stroke-width="1" fill="none"/><text x="273.00" y="74.85" fill="#e8e8e8" font-family="Liberation Sans" font-size="5.9">1</text><path d="M631.50 69.10 H390.00 L389.10 72.75 L390.00 76.40 H631.50" stroke="#008a00" stroke-width="1" fill="none"/><text x="390.70" y="74.85" fill="#e8e8e8" font-family="Liberation Sans" font-size="5.9">0</text><path d="M197.50 83.40 L198.40 79.75 H271.70 L272.60 83.40 L271.70 87.05 H198.40 Z" stroke="#a80010" stroke-width="1" fill="none"/><text x="199.10" y="85.50" fill="#e8e8e8" font-family="Liberation Sans" font-size="5.9" textLength="10.3" lengthAdjust="spacingAndGlyphs">XXX</text><path d="M272.60 83.40 L273.50 79.75 H342.20 L343.10 83.40 L342.20 87.05 H273.50 Z" stroke="#008a00" stroke-width="1" fill="none"/><text x="274.20" y="85.50" fill="#e8e8e8" font-family="Liberation Sans" font-size="5.9">1</text><path d="M631.50 79.75 H344.00 L343.10 83.40 L344.00 87.05 H631.50" stroke="#008a00" stroke-width="1" fill="none"/><text x="344.70" y="85.50" fill="#e8e8e8" font-family="Liberation Sans" font-size="5.9">0</text><path d="M197.50 94.05 L198.40 90.40 H272.70 L273.60 94.05 L272.70 97.70 H198.40 Z" stroke="#a80010" stroke-width="1" fill="none"/><text x="199.10" y="96.15" fill="#e8e8e8" font-family="Liberation Sans" font-size="5.9" textLength="10.3" lengthAdjust="spacingAndGlyphs">XXX</text><path d="M273.60 94.05 L274.50 90.40 H431.30 L432.20 94.05 L431.30 97.70 H274.50 Z" stroke="#008a00" stroke-width="1" fill="none"/><text x="275.20" y="96.15" fill="#e8e8e8" font-family="Liberation Sans" font-size="5.9">1</text><path d="M631.50 90.40 H433.10 L432.20 94.05 L433.10 97.70 H631.50" stroke="#008a00" stroke-width="1" fill="none"/><text x="433.80" y="96.15" fill="#e8e8e8" font-family="Liberation Sans" font-size="5.9">0</text><path d="M197.50 104.70 L198.40 101.05 H273.60 L274.50 104.70 L273.60 108.35 H198.40 Z" stroke="#a80010" stroke-width="1" fill="none"/><text x="199.10" y="106.80" fill="#e8e8e8" font-family="Liberation Sans" font-size="5.9" textLength="10.3" lengthAdjust="spacingAndGlyphs">XXX</text><path d="M274.50 104.70 L275.40 101.05 H343.60 L344.50 104.70 L343.60 108.35 H275.40 Z" stroke="#008a00" stroke-width="1" fill="none"/><text x="276.10" y="106.80" fill="#e8e8e8" font-family="Liberation Sans" font-size="5.9">1</text><path d="M631.50 101.05 H345.40 L344.50 104.70 L345.40 108.35 H631.50" stroke="#008a00" stroke-width="1" fill="none"/><text x="346.10" y="106.80" fill="#e8e8e8" font-family="Liberation Sans" font-size="5.9">0</text><path d="M197.50 115.35 L198.40 111.70 H274.40 L275.30 115.35 L274.40 119.00 H198.40 Z" stroke="#a80010" stroke-width="1" fill="none"/><text x="199.10" y="117.45" fill="#e8e8e8" font-family="Liberation Sans" font-size="5.9" textLength="10.3" lengthAdjust="spacingAndGlyphs">XXX</text><path d="M631.50 111.70 H276.20 L275.30 115.35 L276.20 119.00 H631.50" stroke="#008a00" stroke-width="1" fill="none"/><text x="276.90" y="117.45" fill="#e8e8e8" font-family="Liberation Sans" font-size="5.9">1</text><path d="M197.50 126.00 L198.40 122.35 H275.30 L276.20 126.00 L275.30 129.65 H198.40 Z" stroke="#a80010" stroke-width="1" fill="none"/><text x="199.10" y="128.10" fill="#e8e8e8" font-family="Liberation Sans" font-size="5.9" textLength="10.3" lengthAdjust="spacingAndGlyphs">XXX</text><path d="M276.20 126.00 L277.10 122.35 H345.60 L346.50 126.00 L345.60 129.65 H277.10 Z" stroke="#008a00" stroke-width="1" fill="none"/><text x="277.80" y="128.10" fill="#e8e8e8" font-family="Liberation Sans" font-size="5.9">1</text><path d="M631.50 122.35 H347.40 L346.50 126.00 L347.40 129.65 H631.50" stroke="#008a00" stroke-width="1" fill="none"/><text x="348.10" y="128.10" fill="#e8e8e8" font-family="Liberation Sans" font-size="5.9">0</text><path d="M197.50 136.65 L198.40 133.00 H276.20 L277.10 136.65 L276.20 140.30 H198.40 Z" stroke="#a80010" stroke-width="1" fill="none"/><text x="199.10" y="138.75" fill="#e8e8e8" font-family="Liberation Sans" font-size="5.9" textLength="10.3" lengthAdjust="spacingAndGlyphs">XXX</text><path d="M277.10 136.65 L278.00 133.00 H391.00 L391.90 136.65 L391.00 140.30 H278.00 Z" stroke="#008a00" stroke-width="1" fill="none"/><text x="278.70" y="138.75" fill="#e8e8e8" font-family="Liberation Sans" font-size="5.9">1</text><path d="M631.50 133.00 H392.80 L391.90 136.65 L392.80 140.30 H631.50" stroke="#008a00" stroke-width="1" fill="none"/><text x="393.50" y="138.75" fill="#e8e8e8" font-family="Liberation Sans" font-size="5.9">0</text><path d="M197.50 147.30 L198.40 143.65 H277.10 L278.00 147.30 L277.10 150.95 H198.40 Z" stroke="#a80010" stroke-width="1" fill="none"/><text x="199.10" y="149.40" fill="#e8e8e8" font-family="Liberation Sans" font-size="5.9" textLength="10.3" lengthAdjust="spacingAndGlyphs">XXX</text><path d="M278.00 147.30 L278.90 143.65 H347.10 L348.00 147.30 L347.10 150.95 H278.90 Z" stroke="#008a00" stroke-width="1" fill="none"/><text x="279.60" y="149.40" fill="#e8e8e8" font-family="Liberation Sans" font-size="5.9">1</text><path d="M631.50 143.65 H348.90 L348.00 147.30 L348.90 150.95 H631.50" stroke="#008a00" stroke-width="1" fill="none"/><text x="349.60" y="149.40" fill="#e8e8e8" font-family="Liberation Sans" font-size="5.9">0</text><path d="M197.50 157.95 L198.40 154.30 H278.10 L279.00 157.95 L278.10 161.60 H198.40 Z" stroke="#a80010" stroke-width="1" fill="none"/><text x="199.10" y="160.05" fill="#e8e8e8" font-family="Liberation Sans" font-size="5.9" textLength="10.3" lengthAdjust="spacingAndGlyphs">XXX</text><path d="M631.50 154.30 H279.90 L279.00 157.95 L279.90 161.60 H631.50" stroke="#008a00" stroke-width="1" fill="none"/><text x="280.60" y="160.05" fill="#e8e8e8" font-family="Liberation Sans" font-size="5.9">1</text><path d="M197.50 168.60 L198.40 164.95 H279.30 L280.20 168.60 L279.30 172.25 H198.40 Z" stroke="#a80010" stroke-width="1" fill="none"/><text x="199.10" y="170.70" fill="#e8e8e8" font-family="Liberation Sans" font-size="5.9" textLength="10.3" lengthAdjust="spacingAndGlyphs">XXX</text><path d="M280.20 168.60 L281.10 164.95 H347.90 L348.80 168.60 L347.90 172.25 H281.10 Z" stroke="#008a00" stroke-width="1" fill="none"/><text x="281.80" y="170.70" fill="#e8e8e8" font-family="Liberation Sans" font-size="5.9">1</text><path d="M631.50 164.95 H349.70 L348.80 168.60 L349.70 172.25 H631.50" stroke="#008a00" stroke-width="1" fill="none"/><text x="350.40" y="170.70" fill="#e8e8e8" font-family="Liberation Sans" font-size="5.9">0</text><path d="M197.50 179.25 L198.40 175.60 H280.70 L281.60 179.25 L280.70 182.90 H198.40 Z" stroke="#a80010" stroke-width="1" fill="none"/><text x="199.10" y="181.35" fill="#e8e8e8" font-family="Liberation Sans" font-size="5.9" textLength="10.3" lengthAdjust="spacingAndGlyphs">XXX</text><path d="M281.60 179.25 L282.50 175.60 H418.00 L418.90 179.25 L418.00 182.90 H282.50 Z" stroke="#008a00" stroke-width="1" fill="none"/><text x="283.20" y="181.35" fill="#e8e8e8" font-family="Liberation Sans" font-size="5.9">1</text><path d="M631.50 175.60 H419.80 L418.90 179.25 L419.80 182.90 H631.50" stroke="#008a00" stroke-width="1" fill="none"/><text x="420.50" y="181.35" fill="#e8e8e8" font-family="Liberation Sans" font-size="5.9">0</text><path d="M197.50 189.90 L198.40 186.25 H281.70 L282.60 189.90 L281.70 193.55 H198.40 Z" stroke="#a80010" stroke-width="1" fill="none"/><text x="199.10" y="192.00" fill="#e8e8e8" font-family="Liberation Sans" font-size="5.9" textLength="10.3" lengthAdjust="spacingAndGlyphs">XXX</text><path d="M282.60 189.90 L283.50 186.25 H348.50 L349.40 189.90 L348.50 193.55 H283.50 Z" stroke="#008a00" stroke-width="1" fill="none"/><text x="284.20" y="192.00" fill="#e8e8e8" font-family="Liberation Sans" font-size="5.9">1</text><path d="M631.50 186.25 H350.30 L349.40 189.90 L350.30 193.55 H631.50" stroke="#008a00" stroke-width="1" fill="none"/><text x="351.00" y="192.00" fill="#e8e8e8" font-family="Liberation Sans" font-size="5.9">0</text><path d="M197.50 200.55 L198.40 196.90 H282.60 L283.50 200.55 L282.60 204.20 H198.40 Z" stroke="#a80010" stroke-width="1" fill="none"/><text x="199.10" y="202.65" fill="#e8e8e8" font-family="Liberation Sans" font-size="5.9" textLength="10.3" lengthAdjust="spacingAndGlyphs">XXX</text><path d="M283.50 200.55 L284.40 196.90 H393.90 L394.80 200.55 L393.90 204.20 H284.40 Z" stroke="#008a00" stroke-width="1" fill="none"/><text x="285.10" y="202.65" fill="#e8e8e8" font-family="Liberation Sans" font-size="5.9">1</text><path d="M631.50 196.90 H395.70 L394.80 200.55 L395.70 204.20 H631.50" stroke="#008a00" stroke-width="1" fill="none"/><text x="396.40" y="202.65" fill="#e8e8e8" font-family="Liberation Sans" font-size="5.9">0</text><path d="M197.50 211.20 L198.40 207.55 H283.60 L284.50 211.20 L283.60 214.85 H198.40 Z" stroke="#a80010" stroke-width="1" fill="none"/><text x="199.10" y="213.30" fill="#e8e8e8" font-family="Liberation Sans" font-size="5.9" textLength="10.3" lengthAdjust="spacingAndGlyphs">XXX</text><path d="M284.50 211.20 L285.40 207.55 H350.40 L351.30 211.20 L350.40 214.85 H285.40 Z" stroke="#008a00" stroke-width="1" fill="none"/><text x="286.10" y="213.30" fill="#e8e8e8" font-family="Liberation Sans" font-size="5.9">1</text><path d="M631.50 207.55 H352.20 L351.30 211.20 L352.20 214.85 H631.50" stroke="#008a00" stroke-width="1" fill="none"/><text x="352.90" y="213.30" fill="#e8e8e8" font-family="Liberation Sans" font-size="5.9">0</text><path d="M197.50 221.85 L198.40 218.20 H284.60 L285.50 221.85 L284.60 225.50 H198.40 Z" stroke="#a80010" stroke-width="1" fill="none"/><text x="199.10" y="223.95" fill="#e8e8e8" font-family="Liberation Sans" font-size="5.9" textLength="10.3" lengthAdjust="spacingAndGlyphs">XXX</text><path d="M631.50 218.20 H286.40 L285.50 221.85 L286.40 225.50 H631.50" stroke="#008a00" stroke-width="1" fill="none"/><text x="287.10" y="223.95" fill="#e8e8e8" font-family="Liberation Sans" font-size="5.9">1</text><path d="M197.50 232.50 L198.40 228.85 H285.60 L286.50 232.50 L285.60 236.15 H198.40 Z" stroke="#a80010" stroke-width="1" fill="none"/><text x="199.10" y="234.60" fill="#e8e8e8" font-family="Liberation Sans" font-size="5.9" textLength="10.3" lengthAdjust="spacingAndGlyphs">XXX</text><path d="M286.50 232.50 L287.40 228.85 H351.30 L352.20 232.50 L351.30 236.15 H287.40 Z" stroke="#008a00" stroke-width="1" fill="none"/><text x="288.10" y="234.60" fill="#e8e8e8" font-family="Liberation Sans" font-size="5.9">1</text><path d="M631.50 228.85 H353.10 L352.20 232.50 L353.10 236.15 H631.50" stroke="#008a00" stroke-width="1" fill="none"/><text x="353.80" y="234.60" fill="#e8e8e8" font-family="Liberation Sans" font-size="5.9">0</text><path d="M197.50 243.15 L198.40 239.50 H286.60 L287.50 243.15 L286.60 246.80 H198.40 Z" stroke="#a80010" stroke-width="1" fill="none"/><text x="199.10" y="245.25" fill="#e8e8e8" font-family="Liberation Sans" font-size="5.9" textLength="10.3" lengthAdjust="spacingAndGlyphs">XXX</text><path d="M287.50 243.15 L288.40 239.50 H433.60 L434.50 243.15 L433.60 246.80 H288.40 Z" stroke="#008a00" stroke-width="1" fill="none"/><text x="289.10" y="245.25" fill="#e8e8e8" font-family="Liberation Sans" font-size="5.9">1</text><path d="M631.50 239.50 H435.40 L434.50 243.15 L435.40 246.80 H631.50" stroke="#008a00" stroke-width="1" fill="none"/><text x="436.10" y="245.25" fill="#e8e8e8" font-family="Liberation Sans" font-size="5.9">0</text><path d="M197.50 253.80 L198.40 250.15 H287.60 L288.50 253.80 L287.60 257.45 H198.40 Z" stroke="#a80010" stroke-width="1" fill="none"/><text x="199.10" y="255.90" fill="#e8e8e8" font-family="Liberation Sans" font-size="5.9" textLength="10.3" lengthAdjust="spacingAndGlyphs">XXX</text><path d="M288.50 253.80 L289.40 250.15 H352.70 L353.60 253.80 L352.70 257.45 H289.40 Z" stroke="#008a00" stroke-width="1" fill="none"/><text x="290.10" y="255.90" fill="#e8e8e8" font-family="Liberation Sans" font-size="5.9">1</text><path d="M631.50 250.15 H354.50 L353.60 253.80 L354.50 257.45 H631.50" stroke="#008a00" stroke-width="1" fill="none"/><text x="355.20" y="255.90" fill="#e8e8e8" font-family="Liberation Sans" font-size="5.9">0</text><path d="M197.50 264.45 L198.40 260.80 H288.60 L289.50 264.45 L288.60 268.10 H198.40 Z" stroke="#a80010" stroke-width="1" fill="none"/><text x="199.10" y="266.55" fill="#e8e8e8" font-family="Liberation Sans" font-size="5.9" textLength="10.3" lengthAdjust="spacingAndGlyphs">XXX</text><path d="M289.50 264.45 L290.40 260.80 H395.80 L396.70 264.45 L395.80 268.10 H290.40 Z" stroke="#008a00" stroke-width="1" fill="none"/><text x="291.10" y="266.55" fill="#e8e8e8" font-family="Liberation Sans" font-size="5.9">1</text><path d="M631.50 260.80 H397.60 L396.70 264.45 L397.60 268.10 H631.50" stroke="#008a00" stroke-width="1" fill="none"/><text x="398.30" y="266.55" fill="#e8e8e8" font-family="Liberation Sans" font-size="5.9">0</text><path d="M197.50 275.10 L198.40 271.45 H289.60 L290.50 275.10 L289.60 278.75 H198.40 Z" stroke="#a80010" stroke-width="1" fill="none"/><text x="199.10" y="277.20" fill="#e8e8e8" font-family="Liberation Sans" font-size="5.9" textLength="10.3" lengthAdjust="spacingAndGlyphs">XXX</text><path d="M290.50 275.10 L291.40 271.45 H354.10 L355.00 275.10 L354.10 278.75 H291.40 Z" stroke="#008a00" stroke-width="1" fill="none"/><text x="292.10" y="277.20" fill="#e8e8e8" font-family="Liberation Sans" font-size="5.9">1</text><path d="M631.50 271.45 H355.90 L355.00 275.10 L355.90 278.75 H631.50" stroke="#008a00" stroke-width="1" fill="none"/><text x="356.60" y="277.20" fill="#e8e8e8" font-family="Liberation Sans" font-size="5.9">0</text><path d="M197.50 285.75 L198.40 282.10 H290.60 L291.50 285.75 L290.60 289.40 H198.40 Z" stroke="#a80010" stroke-width="1" fill="none"/><text x="199.10" y="287.85" fill="#e8e8e8" font-family="Liberation Sans" font-size="5.9" textLength="10.3" lengthAdjust="spacingAndGlyphs">XXX</text><path d="M291.50 285.75 L292.40 282.10 H421.00 L421.90 285.75 L421.00 289.40 H292.40 Z" stroke="#008a00" stroke-width="1" fill="none"/><text x="293.10" y="287.85" fill="#e8e8e8" font-family="Liberation Sans" font-size="5.9">1</text><path d="M631.50 282.10 H422.80 L421.90 285.75 L422.80 289.40 H631.50" stroke="#008a00" stroke-width="1" fill="none"/><text x="423.50" y="287.85" fill="#e8e8e8" font-family="Liberation Sans" font-size="5.9">0</text><path d="M197.50 296.40 L198.40 292.75 H291.70 L292.60 296.40 L291.70 300.05 H198.40 Z" stroke="#a80010" stroke-width="1" fill="none"/><text x="199.10" y="298.50" fill="#e8e8e8" font-family="Liberation Sans" font-size="5.9" textLength="10.3" lengthAdjust="spacingAndGlyphs">XXX</text><path d="M292.60 296.40 L293.50 292.75 H355.60 L356.50 296.40 L355.60 300.05 H293.50 Z" stroke="#008a00" stroke-width="1" fill="none"/><text x="294.20" y="298.50" fill="#e8e8e8" font-family="Liberation Sans" font-size="5.9">1</text><path d="M631.50 292.75 H357.40 L356.50 296.40 L357.40 300.05 H631.50" stroke="#008a00" stroke-width="1" fill="none"/><text x="358.10" y="298.50" fill="#e8e8e8" font-family="Liberation Sans" font-size="5.9">0</text><path d="M197.50 307.05 L198.40 303.40 H292.60 L293.50 307.05 L292.60 310.70 H198.40 Z" stroke="#a80010" stroke-width="1" fill="none"/><text x="199.10" y="309.15" fill="#e8e8e8" font-family="Liberation Sans" font-size="5.9" textLength="10.3" lengthAdjust="spacingAndGlyphs">XXX</text><path d="M631.50 303.40 H294.40 L293.50 307.05 L294.40 310.70 H631.50" stroke="#008a00" stroke-width="1" fill="none"/><text x="295.10" y="309.15" fill="#e8e8e8" font-family="Liberation Sans" font-size="5.9">1</text><path d="M197.50 317.70 L198.40 314.05 H293.60 L294.50 317.70 L293.60 321.35 H198.40 Z" stroke="#a80010" stroke-width="1" fill="none"/><text x="199.10" y="319.80" fill="#e8e8e8" font-family="Liberation Sans" font-size="5.9" textLength="10.3" lengthAdjust="spacingAndGlyphs">XXX</text><path d="M294.50 317.70 L295.40 314.05 H356.10 L357.00 317.70 L356.10 321.35 H295.40 Z" stroke="#008a00" stroke-width="1" fill="none"/><text x="296.10" y="319.80" fill="#e8e8e8" font-family="Liberation Sans" font-size="5.9">1</text><path d="M631.50 314.05 H357.90 L357.00 317.70 L357.90 321.35 H631.50" stroke="#008a00" stroke-width="1" fill="none"/><text x="358.60" y="319.80" fill="#e8e8e8" font-family="Liberation Sans" font-size="5.9">0</text><path d="M197.50 328.35 L198.40 324.70 H294.60 L295.50 328.35 L294.60 332.00 H198.40 Z" stroke="#a80010" stroke-width="1" fill="none"/><text x="199.10" y="330.45" fill="#e8e8e8" font-family="Liberation Sans" font-size="5.9" textLength="10.3" lengthAdjust="spacingAndGlyphs">XXX</text><path d="M295.50 328.35 L296.40 324.70 H398.70 L399.60 328.35 L398.70 332.00 H296.40 Z" stroke="#008a00" stroke-width="1" fill="none"/><text x="297.10" y="330.45" fill="#e8e8e8" font-family="Liberation Sans" font-size="5.9">1</text><path d="M631.50 324.70 H400.50 L399.60 328.35 L400.50 332.00 H631.50" stroke="#008a00" stroke-width="1" fill="none"/><text x="401.20" y="330.45" fill="#e8e8e8" font-family="Liberation Sans" font-size="5.9">0</text><path d="M197.50 339.00 L198.40 335.35 H295.60 L296.50 339.00 L295.60 342.65 H198.40 Z" stroke="#a80010" stroke-width="1" fill="none"/><text x="199.10" y="341.10" fill="#e8e8e8" font-family="Liberation Sans" font-size="5.9" textLength="10.3" lengthAdjust="spacingAndGlyphs">XXX</text><path d="M296.50 339.00 L297.40 335.35 H357.00 L357.90 339.00 L357.00 342.65 H297.40 Z" stroke="#008a00" stroke-width="1" fill="none"/><text x="298.10" y="341.10" fill="#e8e8e8" font-family="Liberation Sans" font-size="5.9">1</text><path d="M631.50 335.35 H358.80 L357.90 339.00 L358.80 342.65 H631.50" stroke="#008a00" stroke-width="1" fill="none"/><text x="359.50" y="341.10" fill="#e8e8e8" font-family="Liberation Sans" font-size="5.9">0</text><path d="M631.50 346.00 H198.40 L197.50 349.65 L198.40 353.30 H631.50" stroke="#008a00" stroke-width="1" fill="none"/><text x="199.10" y="351.75" fill="#e8e8e8" font-family="Liberation Sans" font-size="5.9">0</text><path d="M631.50 356.65 H198.40 L197.50 360.30 L198.40 363.95 H631.50" stroke="#008a00" stroke-width="1" fill="none"/><text x="199.10" y="362.40" fill="#e8e8e8" font-family="Liberation Sans" font-size="5.9">1</text><path d="M631.50 388.60 H198.40 L197.50 392.25 L198.40 395.90 H631.50" stroke="#008a00" stroke-width="1" fill="none"/><text x="199.10" y="394.35" fill="#e8e8e8" font-family="Liberation Sans" font-size="5.9">101</text><path d="M197.50 370.95 L198.40 367.30 H296.50 L297.40 370.95 L296.50 374.60 H198.40 Z" stroke="#008a00" stroke-width="1" fill="none"/><text x="199.10" y="373.05" fill="#e8e8e8" font-family="Liberation Sans" font-size="5.9">0</text><path d="M297.40 370.95 L298.30 367.30 H359.00 L359.90 370.95 L359.00 374.60 H298.30 Z" stroke="#008a00" stroke-width="1" fill="none"/><text x="299.00" y="373.05" fill="#e8e8e8" font-family="Liberation Sans" font-size="5.9">1</text><path d="M359.90 370.95 L360.80 367.30 H401.60 L402.50 370.95 L401.60 374.60 H360.80 Z" stroke="#008a00" stroke-width="1" fill="none"/><text x="361.50" y="373.05" fill="#e8e8e8" font-family="Liberation Sans" font-size="5.9">2</text><path d="M402.50 370.95 L403.40 367.30 H425.10 L426.00 370.95 L425.10 374.60 H403.40 Z" stroke="#008a00" stroke-width="1" fill="none"/><text x="404.10" y="373.05" fill="#e8e8e8" font-family="Liberation Sans" font-size="5.9">3</text><path d="M426.00 370.95 L426.90 367.30 H440.70 L441.60 370.95 L440.70 374.60 H426.90 Z" stroke="#008a00" stroke-width="1" fill="none"/><text x="427.60" y="373.05" fill="#e8e8e8" font-family="Liberation Sans" font-size="5.9">4</text><path d="M441.60 370.95 L442.50 367.30 H444.00 L444.90 370.95 L444.00 374.60 H442.50 Z" stroke="#008a00" stroke-width="1" fill="none"/><path d="M444.90 370.95 L445.80 367.30 H450.70 L451.60 370.95 L450.70 374.60 H445.80 Z" stroke="#008a00" stroke-width="1" fill="none"/><text x="446.50" y="373.05" fill="#e8e8e8" font-family="Liberation Sans" font-size="5.9">6</text><path d="M451.60 370.95 L452.50 367.30 H454.30 L455.20 370.95 L454.30 374.60 H452.50 Z" stroke="#008a00" stroke-width="1" fill="none"/><path d="M455.20 370.95 L456.10 367.30 H460.10 L461.00 370.95 L460.10 374.60 H456.10 Z" stroke="#008a00" stroke-width="1" fill="none"/><text x="456.80" y="373.05" fill="#e8e8e8" font-family="Liberation Sans" font-size="5.9">8</text><path d="M461.00 370.95 L461.90 367.30 H468.40 L469.30 370.95 L468.40 374.60 H461.90 Z" stroke="#008a00" stroke-width="1" fill="none"/><text x="462.60" y="373.05" fill="#e8e8e8" font-family="Liberation Sans" font-size="5.9">9</text><path d="M469.30 370.95 L470.20 367.30 H471.80 L472.70 370.95 L471.80 374.60 H470.20 Z" stroke="#008a00" stroke-width="1" fill="none"/><path d="M472.70 370.95 L473.60 367.30 H480.50 L481.40 370.95 L480.50 374.60 H473.60 Z" stroke="#008a00" stroke-width="1" fill="none"/><text x="474.30" y="373.05" fill="#e8e8e8" font-family="Liberation Sans" font-size="5.9">•</text><path d="M481.40 370.95 L482.30 367.30 H489.00 L489.90 370.95 L489.00 374.60 H482.30 Z" stroke="#008a00" stroke-width="1" fill="none"/><text x="483.00" y="373.05" fill="#e8e8e8" font-family="Liberation Sans" font-size="5.9">•</text><path d="M489.90 370.95 L490.80 367.30 H496.80 L497.70 370.95 L496.80 374.60 H490.80 Z" stroke="#008a00" stroke-width="1" fill="none"/><text x="491.50" y="373.05" fill="#e8e8e8" font-family="Liberation Sans" font-size="5.9">•</text><path d="M497.70 370.95 L498.60 367.30 H504.60 L505.50 370.95 L504.60 374.60 H498.60 Z" stroke="#008a00" stroke-width="1" fill="none"/><text x="499.30" y="373.05" fill="#e8e8e8" font-family="Liberation Sans" font-size="5.9">•</text><path d="M505.50 370.95 L506.40 367.30 H512.30 L513.20 370.95 L512.30 374.60 H506.40 Z" stroke="#008a00" stroke-width="1" fill="none"/><text x="507.10" y="373.05" fill="#e8e8e8" font-family="Liberation Sans" font-size="5.9">•</text><path d="M513.20 370.95 L514.10 367.30 H515.80 L516.70 370.95 L515.80 374.60 H514.10 Z" stroke="#008a00" stroke-width="1" fill="none"/><path d="M516.70 370.95 L517.60 367.30 H524.10 L525.00 370.95 L524.10 374.60 H517.60 Z" stroke="#008a00" stroke-width="1" fill="none"/><text x="518.30" y="373.05" fill="#e8e8e8" font-family="Liberation Sans" font-size="5.9">•</text><path d="M525.00 370.95 L525.90 367.30 H533.10 L534.00 370.95 L533.10 374.60 H525.90 Z" stroke="#008a00" stroke-width="1" fill="none"/><text x="526.60" y="373.05" fill="#e8e8e8" font-family="Liberation Sans" font-size="5.9">•</text><path d="M534.00 370.95 L534.90 367.30 H541.50 L542.40 370.95 L541.50 374.60 H534.90 Z" stroke="#008a00" stroke-width="1" fill="none"/><text x="535.60" y="373.05" fill="#e8e8e8" font-family="Liberation Sans" font-size="5.9">•</text><path d="M542.40 370.95 L543.30 367.30 H547.70 L548.60 370.95 L547.70 374.60 H543.30 Z" stroke="#008a00" stroke-width="1" fill="none"/><text x="544.00" y="373.05" fill="#e8e8e8" font-family="Liberation Sans" font-size="5.9">•</text><path d="M548.60 370.95 L549.50 367.30 H556.10 L557.00 370.95 L556.10 374.60 H549.50 Z" stroke="#008a00" stroke-width="1" fill="none"/><text x="550.20" y="373.05" fill="#e8e8e8" font-family="Liberation Sans" font-size="5.9">•</text><path d="M557.00 370.95 L557.90 367.30 H567.10 L568.00 370.95 L567.10 374.60 H557.90 Z" stroke="#008a00" stroke-width="1" fill="none"/><text x="558.60" y="373.05" fill="#e8e8e8" font-family="Liberation Sans" font-size="5.9">24</text><path d="M631.50 367.30 H568.90 L568.00 370.95 L568.90 374.60 H631.50" stroke="#008a00" stroke-width="1" fill="none"/><text x="569.60" y="373.05" fill="#e8e8e8" font-family="Liberation Sans" font-size="5.9">25</text><path d="M197.50 381.60 L198.40 377.95 H358.40 L359.30 381.60 L358.40 385.25 H198.40 Z" stroke="#008a00" stroke-width="1" fill="none"/><text x="199.10" y="383.70" fill="#e8e8e8" font-family="Liberation Sans" font-size="5.9">2</text><path d="M359.30 381.60 L360.20 377.95 H399.70 L400.60 381.60 L399.70 385.25 H360.20 Z" stroke="#008a00" stroke-width="1" fill="none"/><text x="360.90" y="383.70" fill="#e8e8e8" font-family="Liberation Sans" font-size="5.9">3</text><path d="M400.60 381.60 L401.50 377.95 H422.50 L423.40 381.60 L422.50 385.25 H401.50 Z" stroke="#008a00" stroke-width="1" fill="none"/><text x="402.20" y="383.70" fill="#e8e8e8" font-family="Liberation Sans" font-size="5.9">5</text><path d="M423.40 381.60 L424.30 377.95 H434.90 L435.80 381.60 L434.90 385.25 H424.30 Z" stroke="#008a00" stroke-width="1" fill="none"/><text x="425.00" y="383.70" fill="#e8e8e8" font-family="Liberation Sans" font-size="5.9">7</text><path d="M435.80 381.60 L436.70 377.95 H437.65 L438.55 381.60 L437.65 385.25 H436.70 Z" stroke="#008a00" stroke-width="1" fill="none"/><path d="M438.55 381.60 L439.45 377.95 H440.40 L441.30 381.60 L440.40 385.25 H439.45 Z" stroke="#008a00" stroke-width="1" fill="none"/><path d="M441.30 381.60 L442.20 377.95 H443.15 L444.05 381.60 L443.15 385.25 H442.20 Z" stroke="#008a00" stroke-width="1" fill="none"/><path d="M444.05 381.60 L444.95 377.95 H445.90 L446.80 381.60 L445.90 385.25 H444.95 Z" stroke="#008a00" stroke-width="1" fill="none"/><path d="M446.80 381.60 L447.70 377.95 H448.65 L449.55 381.60 L448.65 385.25 H447.70 Z" stroke="#008a00" stroke-width="1" fill="none"/><path d="M449.55 381.60 L450.45 377.95 H451.40 L452.30 381.60 L451.40 385.25 H450.45 Z" stroke="#008a00" stroke-width="1" fill="none"/><path d="M452.30 381.60 L453.20 377.95 H454.15 L455.05 381.60 L454.15 385.25 H453.20 Z" stroke="#008a00" stroke-width="1" fill="none"/><path d="M455.05 381.60 L455.95 377.95 H456.90 L457.80 381.60 L456.90 385.25 H455.95 Z" stroke="#008a00" stroke-width="1" fill="none"/><path d="M457.80 381.60 L458.70 377.95 H459.65 L460.55 381.60 L459.65 385.25 H458.70 Z" stroke="#008a00" stroke-width="1" fill="none"/><path d="M460.55 381.60 L461.45 377.95 H462.40 L463.30 381.60 L462.40 385.25 H461.45 Z" stroke="#008a00" stroke-width="1" fill="none"/><path d="M463.30 381.60 L464.20 377.95 H465.15 L466.05 381.60 L465.15 385.25 H464.20 Z" stroke="#008a00" stroke-width="1" fill="none"/><path d="M466.05 381.60 L466.95 377.95 H467.90 L468.80 381.60 L467.90 385.25 H466.95 Z" stroke="#008a00" stroke-width="1" fill="none"/><path d="M468.80 381.60 L469.70 377.95 H470.65 L471.55 381.60 L470.65 385.25 H469.70 Z" stroke="#008a00" stroke-width="1" fill="none"/><path d="M471.55 381.60 L472.45 377.95 H473.40 L474.30 381.60 L473.40 385.25 H472.45 Z" stroke="#008a00" stroke-width="1" fill="none"/><path d="M474.30 381.60 L475.20 377.95 H476.15 L477.05 381.60 L476.15 385.25 H475.20 Z" stroke="#008a00" stroke-width="1" fill="none"/><path d="M477.05 381.60 L477.95 377.95 H478.90 L479.80 381.60 L478.90 385.25 H477.95 Z" stroke="#008a00" stroke-width="1" fill="none"/><path d="M479.80 381.60 L480.70 377.95 H481.65 L482.55 381.60 L481.65 385.25 H480.70 Z" stroke="#008a00" stroke-width="1" fill="none"/><path d="M482.55 381.60 L483.45 377.95 H484.40 L485.30 381.60 L484.40 385.25 H483.45 Z" stroke="#008a00" stroke-width="1" fill="none"/><path d="M485.30 381.60 L486.20 377.95 H487.15 L488.05 381.60 L487.15 385.25 H486.20 Z" stroke="#008a00" stroke-width="1" fill="none"/><path d="M488.05 381.60 L488.95 377.95 H489.90 L490.80 381.60 L489.90 385.25 H488.95 Z" stroke="#008a00" stroke-width="1" fill="none"/><path d="M490.80 381.60 L491.70 377.95 H492.65 L493.55 381.60 L492.65 385.25 H491.70 Z" stroke="#008a00" stroke-width="1" fill="none"/><path d="M493.55 381.60 L494.45 377.95 H495.40 L496.30 381.60 L495.40 385.25 H494.45 Z" stroke="#008a00" stroke-width="1" fill="none"/><path d="M496.30 381.60 L497.20 377.95 H498.15 L499.05 381.60 L498.15 385.25 H497.20 Z" stroke="#008a00" stroke-width="1" fill="none"/><path d="M499.05 381.60 L499.95 377.95 H500.90 L501.80 381.60 L500.90 385.25 H499.95 Z" stroke="#008a00" stroke-width="1" fill="none"/><path d="M501.80 381.60 L502.70 377.95 H503.65 L504.55 381.60 L503.65 385.25 H502.70 Z" stroke="#008a00" stroke-width="1" fill="none"/><path d="M504.55 381.60 L505.45 377.95 H506.40 L507.30 381.60 L506.40 385.25 H505.45 Z" stroke="#008a00" stroke-width="1" fill="none"/><path d="M507.30 381.60 L508.20 377.95 H509.15 L510.05 381.60 L509.15 385.25 H508.20 Z" stroke="#008a00" stroke-width="1" fill="none"/><path d="M510.05 381.60 L510.95 377.95 H511.90 L512.80 381.60 L511.90 385.25 H510.95 Z" stroke="#008a00" stroke-width="1" fill="none"/><path d="M512.80 381.60 L513.70 377.95 H514.65 L515.55 381.60 L514.65 385.25 H513.70 Z" stroke="#008a00" stroke-width="1" fill="none"/><path d="M515.55 381.60 L516.45 377.95 H517.40 L518.30 381.60 L517.40 385.25 H516.45 Z" stroke="#008a00" stroke-width="1" fill="none"/><path d="M518.30 381.60 L519.20 377.95 H520.15 L521.05 381.60 L520.15 385.25 H519.20 Z" stroke="#008a00" stroke-width="1" fill="none"/><path d="M521.05 381.60 L521.95 377.95 H522.90 L523.80 381.60 L522.90 385.25 H521.95 Z" stroke="#008a00" stroke-width="1" fill="none"/><path d="M523.80 381.60 L524.70 377.95 H525.65 L526.55 381.60 L525.65 385.25 H524.70 Z" stroke="#008a00" stroke-width="1" fill="none"/><path d="M526.55 381.60 L527.45 377.95 H528.40 L529.30 381.60 L528.40 385.25 H527.45 Z" stroke="#008a00" stroke-width="1" fill="none"/><path d="M529.30 381.60 L530.20 377.95 H531.15 L532.05 381.60 L531.15 385.25 H530.20 Z" stroke="#008a00" stroke-width="1" fill="none"/><path d="M532.05 381.60 L532.95 377.95 H533.90 L534.80 381.60 L533.90 385.25 H532.95 Z" stroke="#008a00" stroke-width="1" fill="none"/><path d="M534.80 381.60 L535.70 377.95 H536.65 L537.55 381.60 L536.65 385.25 H535.70 Z" stroke="#008a00" stroke-width="1" fill="none"/><path d="M537.55 381.60 L538.45 377.95 H539.40 L540.30 381.60 L539.40 385.25 H538.45 Z" stroke="#008a00" stroke-width="1" fill="none"/><path d="M540.30 381.60 L541.20 377.95 H542.15 L543.05 381.60 L542.15 385.25 H541.20 Z" stroke="#008a00" stroke-width="1" fill="none"/><path d="M543.05 381.60 L543.95 377.95 H544.90 L545.80 381.60 L544.90 385.25 H543.95 Z" stroke="#008a00" stroke-width="1" fill="none"/><path d="M545.80 381.60 L546.70 377.95 H547.65 L548.55 381.60 L547.65 385.25 H546.70 Z" stroke="#008a00" stroke-width="1" fill="none"/><path d="M548.55 381.60 L549.45 377.95 H550.40 L551.30 381.60 L550.40 385.25 H549.45 Z" stroke="#008a00" stroke-width="1" fill="none"/><path d="M551.30 381.60 L552.20 377.95 H553.15 L554.05 381.60 L553.15 385.25 H552.20 Z" stroke="#008a00" stroke-width="1" fill="none"/><path d="M554.05 381.60 L554.95 377.95 H555.90 L556.80 381.60 L555.90 385.25 H554.95 Z" stroke="#008a00" stroke-width="1" fill="none"/><path d="M556.80 381.60 L557.70 377.95 H558.65 L559.55 381.60 L558.65 385.25 H557.70 Z" stroke="#008a00" stroke-width="1" fill="none"/><path d="M559.55 381.60 L560.45 377.95 H561.40 L562.30 381.60 L561.40 385.25 H560.45 Z" stroke="#008a00" stroke-width="1" fill="none"/><path d="M562.30 381.60 L563.20 377.95 H564.15 L565.05 381.60 L564.15 385.25 H563.20 Z" stroke="#008a00" stroke-width="1" fill="none"/><path d="M565.05 381.60 L565.95 377.95 H566.90 L567.80 381.60 L566.90 385.25 H565.95 Z" stroke="#008a00" stroke-width="1" fill="none"/><path d="M567.80 381.60 L568.70 377.95 H572.00 L572.90 381.60 L572.00 385.25 H568.70 Z" stroke="#008a00" stroke-width="1" fill="none"/><path d="M631.50 377.95 H573.80 L572.90 381.60 L573.80 385.25 H631.50" stroke="#008a00" stroke-width="1" fill="none"/><text x="574.50" y="383.70" fill="#e8e8e8" font-family="Liberation Sans" font-size="5.9">101</text><rect x="436" y="378.35" width="136.8" height="6.6" fill="#009800"/><ellipse cx="437.60" cy="381.60" rx="1.15" ry="2.3" fill="#001800"/><ellipse cx="440.90" cy="381.60" rx="1.15" ry="2.3" fill="#001800"/><ellipse cx="444.20" cy="381.60" rx="1.15" ry="2.3" fill="#001800"/><ellipse cx="447.50" cy="381.60" rx="1.15" ry="2.3" fill="#001800"/><ellipse cx="450.80" cy="381.60" rx="1.15" ry="2.3" fill="#001800"/><ellipse cx="454.10" cy="381.60" rx="1.15" ry="2.3" fill="#001800"/><ellipse cx="457.40" cy="381.60" rx="1.15" ry="2.3" fill="#001800"/><ellipse cx="460.70" cy="381.60" rx="1.15" ry="2.3" fill="#001800"/><ellipse cx="464.00" cy="381.60" rx="1.15" ry="2.3" fill="#001800"/><ellipse cx="467.30" cy="381.60" rx="1.15" ry="2.3" fill="#001800"/><ellipse cx="470.60" cy="381.60" rx="1.15" ry="2.3" fill="#001800"/><ellipse cx="473.90" cy="381.60" rx="1.15" ry="2.3" fill="#001800"/><ellipse cx="477.20" cy="381.60" rx="1.15" ry="2.3" fill="#001800"/><ellipse cx="480.50" cy="381.60" rx="1.15" ry="2.3" fill="#001800"/><ellipse cx="483.80" cy="381.60" rx="1.15" ry="2.3" fill="#001800"/><ellipse cx="487.10" cy="381.60" rx="1.15" ry="2.3" fill="#001800"/><ellipse cx="490.40" cy="381.60" rx="1.15" ry="2.3" fill="#001800"/><ellipse cx="493.70" cy="381.60" rx="1.15" ry="2.3" fill="#001800"/><ellipse cx="497.00" cy="381.60" rx="1.15" ry="2.3" fill="#001800"/><ellipse cx="500.30" cy="381.60" rx="1.15" ry="2.3" fill="#001800"/><ellipse cx="503.60" cy="381.60" rx="1.15" ry="2.3" fill="#001800"/><ellipse cx="506.90" cy="381.60" rx="1.15" ry="2.3" fill="#001800"/><ellipse cx="510.20" cy="381.60" rx="1.15" ry="2.3" fill="#001800"/><ellipse cx="513.50" cy="381.60" rx="1.15" ry="2.3" fill="#001800"/><ellipse cx="516.80" cy="381.60" rx="1.15" ry="2.3" fill="#001800"/><ellipse cx="520.10" cy="381.60" rx="1.15" ry="2.3" fill="#001800"/><ellipse cx="523.40" cy="381.60" rx="1.15" ry="2.3" fill="#001800"/><ellipse cx="526.70" cy="381.60" rx="1.15" ry="2.3" fill="#001800"/><ellipse cx="530.00" cy="381.60" rx="1.15" ry="2.3" fill="#001800"/><ellipse cx="533.30" cy="381.60" rx="1.15" ry="2.3" fill="#001800"/><ellipse cx="536.60" cy="381.60" rx="1.15" ry="2.3" fill="#001800"/><ellipse cx="539.90" cy="381.60" rx="1.15" ry="2.3" fill="#001800"/><ellipse cx="543.20" cy="381.60" rx="1.15" ry="2.3" fill="#001800"/><ellipse cx="546.50" cy="381.60" rx="1.15" ry="2.3" fill="#001800"/><ellipse cx="549.80" cy="381.60" rx="1.15" ry="2.3" fill="#001800"/><ellipse cx="553.10" cy="381.60" rx="1.15" ry="2.3" fill="#001800"/><ellipse cx="556.40" cy="381.60" rx="1.15" ry="2.3" fill="#001800"/><ellipse cx="559.70" cy="381.60" rx="1.15" ry="2.3" fill="#001800"/><ellipse cx="563.00" cy="381.60" rx="1.15" ry="2.3" fill="#001800"/><ellipse cx="566.30" cy="381.60" rx="1.15" ry="2.3" fill="#001800"/><ellipse cx="569.60" cy="381.60" rx="1.15" ry="2.3" fill="#001800"/><path d="M631.4 66.5 V405" stroke="#a85a5a" stroke-width="1"/><text x="197.6" y="61.2" fill="#c0c0e0" font-family="Liberation Mono" font-size="5.6" text-anchor="middle">0</text><text x="489.9" y="61.6" fill="#d8d8d8" font-family="Liberation Sans" font-size="6.6" textLength="34.7">100000 sec</text></g></svg>
<div class="r" style="left:197.6px;top:408.3px;width:518px;height:7.4px;background:#c9c7c2;border:1px solid #9c9a95;"></div>
<div class="r" style="left:197.6px;top:408.3px;width:7.4px;height:7.4px;background:linear-gradient(#f4f3f0,#d8d6d1);border:1px solid #9a9893;border-right-color:#5a5a56;border-bottom-color:#5a5a56;"></div>
<div class="r" style="left:205px;top:408.3px;width:502px;height:7.4px;background:linear-gradient(#eceae6,#d8d6d1);border:1px solid #a8a6a1;border-right:1.3px solid #5a5a56;border-bottom:1.3px solid #5a5a56;"></div>
<div class="r" style="left:707px;top:408.3px;width:8.6px;height:7.4px;background:linear-gradient(#f4f3f0,#d8d6d1);border:1px solid #9a9893;border-right-color:#5a5a56;border-bottom-color:#5a5a56;"></div>
<div class="r" style="left:717px;top:56.3px;width:1px;height:349px;background:#6a6a66;"></div>
<div class="r" style="left:718px;top:57px;width:2px;height:8px;background:#f0efec;"></div>
<div class="r" style="left:0px;top:420.8px;width:720px;height:2.2px;background:#7e6464;"></div>
<div class="r" style="left:0px;top:420.8px;width:16px;height:2.2px;background:#1c1616;"></div>
</body></html>
